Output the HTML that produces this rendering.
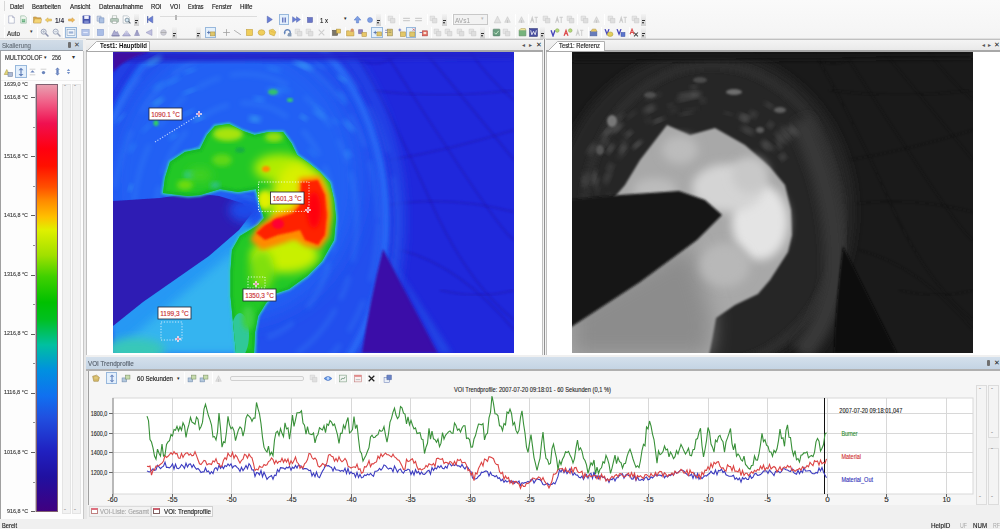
<!DOCTYPE html><html><head><meta charset="utf-8"><style>
html,body{margin:0;padding:0;}
body{width:1000px;height:529px;overflow:hidden;position:relative;background:#f0f0f0;font-family:"Liberation Sans",sans-serif;}
div{box-sizing:border-box;}
svg{position:absolute;display:block;}
</style></head><body>
<div style="position:absolute;left:0px;top:0px;width:1000px;height:39px;background:linear-gradient(#fafafa,#f4f4f4);"></div>
<div style="position:absolute;left:0px;top:38px;width:1000px;height:1px;background:#e0e0e0;"></div>
<div style="position:absolute;left:9.5px;top:0.80px;font-size:7px;line-height:11px;color:#202020;font-weight:normal;white-space:nowrap;transform:scaleX(0.845);transform-origin:0 50%;-webkit-text-stroke:0.15px #202020;">Datei</div>
<div style="position:absolute;left:32px;top:0.80px;font-size:7px;line-height:11px;color:#202020;font-weight:normal;white-space:nowrap;transform:scaleX(0.848);transform-origin:0 50%;-webkit-text-stroke:0.15px #202020;">Bearbeiten</div>
<div style="position:absolute;left:69.7px;top:0.80px;font-size:7px;line-height:11px;color:#202020;font-weight:normal;white-space:nowrap;transform:scaleX(0.884);transform-origin:0 50%;-webkit-text-stroke:0.15px #202020;">Ansicht</div>
<div style="position:absolute;left:98.6px;top:0.80px;font-size:7px;line-height:11px;color:#202020;font-weight:normal;white-space:nowrap;transform:scaleX(0.887);transform-origin:0 50%;-webkit-text-stroke:0.15px #202020;">Datenaufnahme</div>
<div style="position:absolute;left:151px;top:0.80px;font-size:7px;line-height:11px;color:#202020;font-weight:normal;white-space:nowrap;transform:scaleX(0.844);transform-origin:0 50%;-webkit-text-stroke:0.15px #202020;">ROI</div>
<div style="position:absolute;left:169.5px;top:0.80px;font-size:7px;line-height:11px;color:#202020;font-weight:normal;white-space:nowrap;transform:scaleX(0.829);transform-origin:0 50%;-webkit-text-stroke:0.15px #202020;">VOI</div>
<div style="position:absolute;left:187.5px;top:0.80px;font-size:7px;line-height:11px;color:#202020;font-weight:normal;white-space:nowrap;transform:scaleX(0.781);transform-origin:0 50%;-webkit-text-stroke:0.15px #202020;">Extras</div>
<div style="position:absolute;left:211.75px;top:0.80px;font-size:7px;line-height:11px;color:#202020;font-weight:normal;white-space:nowrap;transform:scaleX(0.843);transform-origin:0 50%;-webkit-text-stroke:0.15px #202020;">Fenster</div>
<div style="position:absolute;left:240px;top:0.80px;font-size:7px;line-height:11px;color:#202020;font-weight:normal;white-space:nowrap;transform:scaleX(0.893);transform-origin:0 50%;-webkit-text-stroke:0.15px #202020;">Hilfe</div>
<div style="position:absolute;left:4px;top:1px;width:1px;height:10px;background:#d8d8d8;"></div>
<div style="position:absolute;left:4px;top:14px;width:1px;height:11px;background:#d4d4d4;border-right:1px solid #fff;"></div>
<svg style="left:7px;top:15px;opacity:0.85" width="9" height="9" viewBox="0 0 16 16"><path d="M3 1.5 H10 L13 4.5 V14.5 H3 Z" fill="#fff" stroke="#8088a8"/><path d="M10 1.5 V4.5 H13" fill="#dde" stroke="#8088a8"/></svg>
<svg style="left:19px;top:15px;opacity:0.85" width="9" height="9" viewBox="0 0 16 16"><path d="M3 1.5 H10 L13 4.5 V14.5 H3 Z" fill="#eef6ee" stroke="#70a080"/><path d="M5 7 H11 V13 H5 Z" fill="#48a068"/><path d="M6 8 H10 M6 10 H10" stroke="#c0e0c0"/></svg>
<div style="position:absolute;left:30px;top:14px;width:1px;height:11px;background:#d4d4d4;border-right:1px solid #fff;"></div>
<svg style="left:33px;top:15px;opacity:0.85" width="9" height="9" viewBox="0 0 16 16"><path d="M1 3.5 H6 L7.5 5 H14 V14 H1 Z" fill="#d8a030" stroke="#a07018"/><path d="M3 7 H15.5 L13.5 14 H1 Z" fill="#f4d060" stroke="#b08020" stroke-width="0.6"/></svg>
<svg style="left:44px;top:16px;opacity:0.85" width="9" height="8" viewBox="0 0 16 16"><path d="M1.5 8 L7 3.5 V6 H14 V10 H7 V12.5 Z" fill="#f0c850" stroke="#c09838"/></svg>
<div style="position:absolute;left:55px;top:14.50px;font-size:7px;line-height:11px;color:#303040;font-weight:bold;white-space:nowrap;transform:scaleX(0.925);transform-origin:0 50%;">1/4</div>
<svg style="left:67px;top:16px;opacity:0.85" width="9" height="8" viewBox="0 0 16 16"><path d="M14.5 8 L9 3.5 V6 H2 V10 H9 V12.5 Z" fill="#f0b040" stroke="#c08828"/></svg>
<div style="position:absolute;left:79px;top:14px;width:1px;height:11px;background:#d4d4d4;border-right:1px solid #fff;"></div>
<svg style="left:82px;top:15px;opacity:0.85" width="9" height="9" viewBox="0 0 16 16"><rect x="1" y="1" width="14" height="14" rx="1" fill="#2838a0"/><rect x="4" y="1.5" width="8" height="5.5" fill="#f0f0ff"/><rect x="4" y="10" width="8" height="5" fill="#6878c8"/></svg>
<div style="position:absolute;left:93px;top:14px;width:1px;height:11px;background:#d4d4d4;border-right:1px solid #fff;"></div>
<svg style="left:96px;top:15px;opacity:0.85" width="9" height="9" viewBox="0 0 16 16"><path d="M2 2 H9 V11 H2 Z" fill="#c8d4e8" stroke="#7088b0"/><path d="M6 5 H14 V14 H6 Z" fill="#a0b8e0" stroke="#5878b0"/></svg>
<div style="position:absolute;left:108px;top:14px;width:1px;height:11px;background:#d4d4d4;border-right:1px solid #fff;"></div>
<svg style="left:110px;top:15px;opacity:0.85" width="9" height="9" viewBox="0 0 16 16"><rect x="4" y="1.5" width="8" height="5" fill="#fff" stroke="#8a9a90"/><rect x="1" y="6" width="14" height="7" rx="1.5" fill="#a8c0b0" stroke="#708878"/><rect x="4" y="11" width="8" height="4" fill="#fff" stroke="#8a9a90"/></svg>
<svg style="left:122px;top:15px;opacity:0.85" width="9" height="9" viewBox="0 0 16 16"><path d="M2 1.5 H10 L13 4.5 V14.5 H2 Z" fill="#fff" stroke="#8898a0"/><circle cx="9" cy="9" r="3.5" fill="#d0e4f0" stroke="#506878" stroke-width="1.3"/><path d="M11.5 11.5 L15 15" stroke="#405060" stroke-width="2"/></svg>
<div style="position:absolute;left:134px;top:14px;width:5px;height:12px;background:linear-gradient(#f4f4f4,#d0d0d0);"></div>
<div style="position:absolute;left:135px;top:20px;width:3px;height:1px;background:#333;"></div>
<div style="position:absolute;left:135px;top:22px;width:0;height:0;border-left:1.5px solid transparent;border-right:1.5px solid transparent;border-top:2px solid #222;"></div>
<div style="position:absolute;left:144px;top:14px;width:1px;height:11px;background:#d4d4d4;border-right:1px solid #fff;"></div>
<svg style="left:146px;top:15px;opacity:0.85" width="9" height="9" viewBox="0 0 16 16"><path d="M12 2 L3 8 L12 14 Z" fill="#5068d0" stroke="#3048a0"/><rect x="2" y="2" width="2" height="12" fill="#3048a0"/></svg>
<div style="position:absolute;left:160px;top:16px;width:97px;height:2px;background:#dcdcdc;border-bottom:1px solid #f8f8f8;"></div>
<div style="position:absolute;left:175px;top:15px;width:2px;height:5px;background:#b8b8b8;"></div>
<svg style="left:265px;top:15px;opacity:0.85" width="9" height="9" viewBox="0 0 16 16"><path d="M4 2 L13 8 L4 14 Z" fill="#5068d0" stroke="#3048a0"/></svg>
<div style="position:absolute;left:279px;top:14px;width:10px;height:11px;background:#e4f0fc;border:1px solid #98b8dc;"></div>
<svg style="left:280px;top:16px;opacity:0.85" width="8" height="8" viewBox="0 0 16 16"><rect x="4" y="3" width="3" height="10" fill="#5868b8"/><rect x="9" y="3" width="3" height="10" fill="#5868b8"/></svg>
<svg style="left:292px;top:15px;opacity:0.85" width="9" height="9" viewBox="0 0 16 16"><path d="M1 3 L8 8 L1 13 Z M8 3 L15 8 L8 13 Z" fill="#5068d0" stroke="#3048a0" stroke-width="0.8"/></svg>
<div style="position:absolute;left:302px;top:14px;width:1px;height:11px;background:#d4d4d4;border-right:1px solid #fff;"></div>
<svg style="left:306px;top:16px;opacity:0.85" width="8" height="8" viewBox="0 0 16 16"><rect x="3" y="3" width="10" height="10" fill="#5060c0" stroke="#303890"/></svg>
<div style="position:absolute;left:317px;top:14px;width:1px;height:11px;background:#d4d4d4;border-right:1px solid #fff;"></div>
<div style="position:absolute;left:320px;top:14.50px;font-size:7px;line-height:11px;color:#202020;font-weight:normal;white-space:nowrap;transform:scaleX(0.857);transform-origin:0 50%;-webkit-text-stroke:0.15px #202020;">1 x</div>
<div style="position:absolute;left:344px;top:15px;font-size:5px;line-height:7px;color:#222;font-weight:normal;white-space:nowrap;">&#9662;</div>
<svg style="left:353px;top:15px;opacity:0.85" width="9" height="9" viewBox="0 0 16 16"><path d="M8 2 L14 9 H10 V14 H6 V9 H2 Z" fill="#6a90e0" stroke="#4068c0"/></svg>
<svg style="left:366px;top:16px;opacity:0.85" width="8" height="8" viewBox="0 0 16 16"><circle cx="8" cy="8" r="5" fill="#6a90e0" stroke="#4068c0"/></svg>
<div style="position:absolute;left:376px;top:14px;width:5px;height:12px;background:linear-gradient(#f4f4f4,#d0d0d0);"></div>
<div style="position:absolute;left:377px;top:20px;width:3px;height:1px;background:#333;"></div>
<div style="position:absolute;left:377px;top:22px;width:0;height:0;border-left:1.5px solid transparent;border-right:1.5px solid transparent;border-top:2px solid #222;"></div>
<div style="position:absolute;left:385px;top:14px;width:1px;height:11px;background:#d4d4d4;border-right:1px solid #fff;"></div>
<svg style="left:387px;top:15px;opacity:0.85" width="9" height="9" viewBox="0 0 16 16"><path d="M2 2 H10 V10 H2 Z" fill="#e4e4e4" stroke="#c8c8c8"/><path d="M6 6 H14 V14 H6 Z" fill="#dcdcdc" stroke="#c4c4c4"/></svg>
<div style="position:absolute;left:399px;top:14px;width:1px;height:11px;background:#d4d4d4;border-right:1px solid #fff;"></div>
<svg style="left:402px;top:15px;opacity:0.85" width="9" height="9" viewBox="0 0 16 16"><path d="M2 6 H14 M2 10 H14" stroke="#c8c8c8" stroke-width="2"/></svg>
<svg style="left:414px;top:15px;opacity:0.85" width="9" height="9" viewBox="0 0 16 16"><path d="M2 6 H14 M2 10 H14" stroke="#c8c8c8" stroke-width="2"/></svg>
<div style="position:absolute;left:427px;top:14px;width:1px;height:11px;background:#d4d4d4;border-right:1px solid #fff;"></div>
<svg style="left:429px;top:15px;opacity:0.85" width="9" height="9" viewBox="0 0 16 16"><path d="M2 2 H10 V10 H2 Z" fill="#e4e4e4" stroke="#c8c8c8"/><path d="M6 6 H14 V14 H6 Z" fill="#dcdcdc" stroke="#c4c4c4"/></svg>
<div style="position:absolute;left:442px;top:14px;width:5px;height:12px;background:linear-gradient(#f4f4f4,#d0d0d0);"></div>
<div style="position:absolute;left:443px;top:20px;width:3px;height:1px;background:#333;"></div>
<div style="position:absolute;left:443px;top:22px;width:0;height:0;border-left:1.5px solid transparent;border-right:1.5px solid transparent;border-top:2px solid #222;"></div>
<div style="position:absolute;left:452px;top:14px;width:1px;height:11px;background:#d4d4d4;border-right:1px solid #fff;"></div>
<div style="position:absolute;left:453px;top:14px;width:35px;height:11px;background:#f2f2f2;border:1px solid #c8c8c8;"></div>
<div style="position:absolute;left:455px;top:14.50px;font-size:7px;line-height:11px;color:#a0a0a0;font-weight:normal;white-space:nowrap;transform:scaleX(0.925);transform-origin:0 50%;">AVs1</div>
<div style="position:absolute;left:481px;top:15px;font-size:5px;line-height:7px;color:#bbb;font-weight:normal;white-space:nowrap;">&#9662;</div>
<svg style="left:493px;top:15px;opacity:0.9" width="9" height="9" viewBox="0 0 16 16"><path d="M2 14 L8 2 L14 14 Z" fill="#e0e0e0" stroke="#c4c4c4"/></svg>
<svg style="left:503px;top:15px;opacity:0.9" width="9" height="9" viewBox="0 0 16 16"><path d="M3 13 L8 3 L13 13 Z" fill="#dcdcdc" stroke="#c0c0c0"/><path d="M8 9 V14" stroke="#c0c0c0" stroke-width="2"/></svg>
<svg style="left:517px;top:15px;opacity:0.9" width="9" height="9" viewBox="0 0 16 16"><path d="M3 13 L8 3 L13 13 Z" fill="#dcdcdc" stroke="#c0c0c0"/><path d="M8 9 V14" stroke="#c0c0c0" stroke-width="2"/></svg>
<svg style="left:530px;top:15px;opacity:0.9" width="9" height="9" viewBox="0 0 16 16"><path d="M1 14 L4 4 L7 14 M2 10 H6 M8 4 H14 M11 4 V14" fill="none" stroke="#c8c8c8" stroke-width="1.8"/></svg>
<svg style="left:542px;top:15px;opacity:0.9" width="9" height="9" viewBox="0 0 16 16"><path d="M2 2 H10 V10 H2 Z" fill="#e4e4e4" stroke="#c8c8c8"/><path d="M6 6 H14 V14 H6 Z" fill="#dcdcdc" stroke="#c4c4c4"/></svg>
<svg style="left:555px;top:15px;opacity:0.9" width="9" height="9" viewBox="0 0 16 16"><path d="M1 14 L4 4 L7 14 M2 10 H6 M8 4 H14 M11 4 V14" fill="none" stroke="#c8c8c8" stroke-width="1.8"/></svg>
<svg style="left:566px;top:15px;opacity:0.9" width="9" height="9" viewBox="0 0 16 16"><path d="M2 2 H10 V10 H2 Z" fill="#e4e4e4" stroke="#c8c8c8"/><path d="M6 6 H14 V14 H6 Z" fill="#dcdcdc" stroke="#c4c4c4"/></svg>
<svg style="left:580px;top:15px;opacity:0.9" width="9" height="9" viewBox="0 0 16 16"><path d="M2 2 H10 V10 H2 Z" fill="#e4e4e4" stroke="#c8c8c8"/><path d="M6 6 H14 V14 H6 Z" fill="#dcdcdc" stroke="#c4c4c4"/></svg>
<svg style="left:592px;top:15px;opacity:0.9" width="9" height="9" viewBox="0 0 16 16"><path d="M3 13 L8 3 L13 13 Z" fill="#dcdcdc" stroke="#c0c0c0"/><path d="M8 9 V14" stroke="#c0c0c0" stroke-width="2"/></svg>
<svg style="left:607px;top:15px;opacity:0.9" width="9" height="9" viewBox="0 0 16 16"><path d="M2 2 H10 V10 H2 Z" fill="#e4e4e4" stroke="#c8c8c8"/><path d="M6 6 H14 V14 H6 Z" fill="#dcdcdc" stroke="#c4c4c4"/></svg>
<svg style="left:619px;top:15px;opacity:0.9" width="9" height="9" viewBox="0 0 16 16"><path d="M1 14 L4 4 L7 14 M2 10 H6 M8 4 H14 M11 4 V14" fill="none" stroke="#c8c8c8" stroke-width="1.8"/></svg>
<svg style="left:631px;top:15px;opacity:0.9" width="9" height="9" viewBox="0 0 16 16"><path d="M2 2 H10 V10 H2 Z" fill="#e4e4e4" stroke="#c8c8c8"/><path d="M6 6 H14 V14 H6 Z" fill="#dcdcdc" stroke="#c4c4c4"/></svg>
<div style="position:absolute;left:515px;top:14px;width:1px;height:11px;background:#d4d4d4;border-right:1px solid #fff;"></div>
<div style="position:absolute;left:528px;top:14px;width:1px;height:11px;background:#d4d4d4;border-right:1px solid #fff;"></div>
<div style="position:absolute;left:577px;top:14px;width:1px;height:11px;background:#d4d4d4;border-right:1px solid #fff;"></div>
<div style="position:absolute;left:604px;top:14px;width:1px;height:11px;background:#d4d4d4;border-right:1px solid #fff;"></div>
<div style="position:absolute;left:641px;top:14px;width:5px;height:12px;background:linear-gradient(#f4f4f4,#d0d0d0);"></div>
<div style="position:absolute;left:642px;top:20px;width:3px;height:1px;background:#333;"></div>
<div style="position:absolute;left:642px;top:22px;width:0;height:0;border-left:1.5px solid transparent;border-right:1.5px solid transparent;border-top:2px solid #222;"></div>
<div style="position:absolute;left:4px;top:27px;width:1px;height:11px;background:#d4d4d4;border-right:1px solid #fff;"></div>
<div style="position:absolute;left:7px;top:27.50px;font-size:7px;line-height:11px;color:#303030;font-weight:normal;white-space:nowrap;transform:scaleX(0.903);transform-origin:0 50%;-webkit-text-stroke:0.15px #303030;">Auto</div>
<div style="position:absolute;left:30px;top:28px;font-size:5px;line-height:7px;color:#333;font-weight:normal;white-space:nowrap;">&#9662;</div>
<div style="position:absolute;left:37px;top:27px;width:1px;height:11px;background:#d4d4d4;border-right:1px solid #fff;"></div>
<svg style="left:40px;top:28px;opacity:0.85" width="9" height="9" viewBox="0 0 16 16"><circle cx="6.5" cy="6.5" r="4.5" fill="#e8eef4" stroke="#8890a8" stroke-width="1.6"/><path d="M9.5 9.5 L15 15" stroke="#7880a0" stroke-width="2.6"/><path d="M4 6.5 H9 M6.5 4 V9" stroke="#8890a8" stroke-width="1"/></svg>
<svg style="left:52px;top:28px;opacity:0.85" width="9" height="9" viewBox="0 0 16 16"><circle cx="6.5" cy="6.5" r="4.5" fill="#e8eef4" stroke="#9098b0" stroke-width="1.6"/><path d="M9.5 9.5 L15 15" stroke="#8890a8" stroke-width="2.6"/><path d="M4 6.5 H9" stroke="#9098b0" stroke-width="1"/></svg>
<div style="position:absolute;left:63px;top:27px;width:1px;height:11px;background:#d4d4d4;border-right:1px solid #fff;"></div>
<div style="position:absolute;left:65px;top:27px;width:12px;height:11px;background:#e4f0fc;border:1px solid #98b8dc;"></div>
<svg style="left:66px;top:28px;opacity:0.85" width="10" height="9" viewBox="0 0 16 16"><rect x="1" y="3" width="14" height="10" fill="#f4f8fc" stroke="#7088a8"/><path d="M4 6 H12 V10 H4 Z" fill="#90a8d0"/></svg>
<svg style="left:81px;top:28px;opacity:0.85" width="9" height="9" viewBox="0 0 16 16"><rect x="1.5" y="2.5" width="13" height="11" fill="#a8bce8" stroke="#7890c8"/><path d="M4 8 H12" stroke="#e0e8ff" stroke-width="2"/></svg>
<div style="position:absolute;left:93px;top:27px;width:1px;height:11px;background:#d4d4d4;border-right:1px solid #fff;"></div>
<svg style="left:96px;top:28px;opacity:0.85" width="9" height="9" viewBox="0 0 16 16"><rect x="2.5" y="2.5" width="11" height="11" fill="#9cb4e4" stroke="#7890c8"/></svg>
<div style="position:absolute;left:108px;top:27px;width:1px;height:11px;background:#d4d4d4;border-right:1px solid #fff;"></div>
<svg style="left:111px;top:28px;opacity:0.85" width="9" height="9" viewBox="0 0 16 16"><path d="M1 14 L6 4 L9 9 L11 6 L15 14 Z" fill="#a0a0cc" stroke="#6a6aa0"/><path d="M2 14 H15" stroke="#505080"/></svg>
<svg style="left:122px;top:28px;opacity:0.85" width="9" height="9" viewBox="0 0 16 16"><path d="M1 14 L8 5 L15 14 Z" fill="#b0b0d8" stroke="#7070a8"/><path d="M5 10 L8 6 L11 10" fill="none" stroke="#f0f0ff"/></svg>
<svg style="left:133px;top:28px;opacity:0.85" width="8" height="9" viewBox="0 0 16 16"><path d="M3 14 L8 3 L13 14 Z" fill="#a0a0cc" stroke="#6a6aa0"/><path d="M8 3 V14" stroke="#6a6aa0"/></svg>
<svg style="left:145px;top:28px;opacity:0.85" width="8" height="9" viewBox="0 0 16 16"><path d="M14 2 L2 8 L14 14 Z" fill="#b8b8dc" stroke="#8080b0"/></svg>
<div style="position:absolute;left:157px;top:27px;width:1px;height:11px;background:#d4d4d4;border-right:1px solid #fff;"></div>
<svg style="left:159px;top:28px;opacity:0.85" width="9" height="9" viewBox="0 0 16 16"><circle cx="8" cy="8" r="5" fill="#c8c8d0" stroke="#a0a0b0"/><path d="M3 8 H13" stroke="#888"/></svg>
<div style="position:absolute;left:172px;top:27px;width:5px;height:12px;background:linear-gradient(#f4f4f4,#d0d0d0);"></div>
<div style="position:absolute;left:173px;top:33px;width:3px;height:1px;background:#333;"></div>
<div style="position:absolute;left:173px;top:35px;width:0;height:0;border-left:1.5px solid transparent;border-right:1.5px solid transparent;border-top:2px solid #222;"></div>
<div style="position:absolute;left:196px;top:27px;width:5px;height:12px;background:linear-gradient(#f4f4f4,#d0d0d0);"></div>
<div style="position:absolute;left:197px;top:33px;width:3px;height:1px;background:#333;"></div>
<div style="position:absolute;left:197px;top:35px;width:0;height:0;border-left:1.5px solid transparent;border-right:1.5px solid transparent;border-top:2px solid #222;"></div>
<div style="position:absolute;left:205px;top:27px;width:11px;height:11px;background:#e4f0fc;border:1px solid #98b8dc;"></div>
<svg style="left:206px;top:28px;opacity:0.85" width="10" height="9" viewBox="0 0 16 16"><path d="M1 8 H7 M4 5 V11" stroke="#4060a0" stroke-width="1.6"/><rect x="7" y="7" width="8" height="7" fill="#e0c050" stroke="#a08020"/></svg>
<svg style="left:222px;top:28px;opacity:0.85" width="9" height="9" viewBox="0 0 16 16"><path d="M8 2 V14 M2 8 H14" stroke="#909090" stroke-width="1.4"/></svg>
<svg style="left:233px;top:28px;opacity:0.85" width="9" height="9" viewBox="0 0 16 16"><path d="M2 4 L14 12" stroke="#909090" stroke-width="1.4"/></svg>
<svg style="left:245px;top:28px;opacity:0.85" width="9" height="9" viewBox="0 0 16 16"><rect x="2.5" y="2.5" width="11" height="11" fill="#f0c840" stroke="#b89020"/></svg>
<svg style="left:257px;top:28px;opacity:0.85" width="9" height="9" viewBox="0 0 16 16"><ellipse cx="8" cy="8" rx="6" ry="5" fill="#f0c840" stroke="#b89020"/></svg>
<svg style="left:268px;top:28px;opacity:0.85" width="9" height="9" viewBox="0 0 16 16"><path d="M2 4 L9 2 L14 7 L11 14 L3 11 Z" fill="#f0c840" stroke="#b89020"/><path d="M5 6 L12 8" stroke="#d8a028"/></svg>
<div style="position:absolute;left:279px;top:27px;width:1px;height:11px;background:#d4d4d4;border-right:1px solid #fff;"></div>
<svg style="left:283px;top:28px;opacity:0.85" width="9" height="9" viewBox="0 0 16 16"><path d="M3 9 A5 5 0 1 1 8 13" fill="none" stroke="#4870b0" stroke-width="2.5"/><path d="M1 8 L5 8 L3 12 Z" fill="#4870b0"/><rect x="9" y="9" width="6" height="6" fill="#7088a8"/></svg>
<svg style="left:294px;top:28px;opacity:0.85" width="9" height="9" viewBox="0 0 16 16"><path d="M2 2 H10 V10 H2 Z" fill="#e4e4e4" stroke="#c8c8c8"/><path d="M6 6 H14 V14 H6 Z" fill="#dcdcdc" stroke="#c4c4c4"/></svg>
<svg style="left:305px;top:28px;opacity:0.85" width="9" height="9" viewBox="0 0 16 16"><path d="M2 2 H10 V10 H2 Z" fill="#e4e4e4" stroke="#c8c8c8"/><path d="M6 6 H14 V14 H6 Z" fill="#dcdcdc" stroke="#c4c4c4"/></svg>
<svg style="left:317px;top:28px;opacity:0.85" width="9" height="9" viewBox="0 0 16 16"><path d="M3 3 L13 13 M13 3 L3 13" stroke="#c8c8c8" stroke-width="2"/></svg>
<div style="position:absolute;left:330px;top:27px;width:1px;height:11px;background:#d4d4d4;border-right:1px solid #fff;"></div>
<svg style="left:332px;top:28px;opacity:0.85" width="9" height="9" viewBox="0 0 16 16"><rect x="1" y="4" width="9" height="9" fill="#686050" stroke="#403828"/><rect x="8" y="2" width="7" height="7" fill="#e8c040" stroke="#a08020"/></svg>
<div style="position:absolute;left:345px;top:27px;width:1px;height:11px;background:#d4d4d4;border-right:1px solid #fff;"></div>
<svg style="left:346px;top:28px;opacity:0.85" width="9" height="9" viewBox="0 0 16 16"><path d="M1 5 H6 L7 6 H14 V14 H1 Z" fill="#e8c050" stroke="#a88020"/><circle cx="11" cy="4" r="3" fill="#d08050"/></svg>
<svg style="left:358px;top:28px;opacity:0.85" width="9" height="9" viewBox="0 0 16 16"><path d="M1 3 L8 3 L8 10 L1 10 Z" fill="#8070b8" stroke="#504090"/><rect x="7" y="8" width="8" height="7" fill="#e8c050" stroke="#a88020"/></svg>
<div style="position:absolute;left:371px;top:27px;width:12px;height:11px;background:#e4f0fc;border:1px solid #98b8dc;"></div>
<svg style="left:373px;top:28px;opacity:0.85" width="9" height="9" viewBox="0 0 16 16"><path d="M1 8 H7 M4 5 V11" stroke="#4060a0" stroke-width="1.6"/><rect x="7" y="7" width="8" height="7" fill="#e0c050" stroke="#a08020"/></svg>
<svg style="left:384px;top:28px;opacity:0.85" width="9" height="9" viewBox="0 0 16 16"><path d="M2 4 H8 M2 8 H8" stroke="#6060a0" stroke-width="1.4"/><rect x="6" y="2" width="9" height="12" fill="#d8c060" stroke="#807030"/><path d="M8 5 H13 M8 8 H13" stroke="#807030"/></svg>
<svg style="left:397px;top:28px;opacity:0.85" width="9" height="9" viewBox="0 0 16 16"><path d="M5 1 V6 M2.5 3.5 H7.5" stroke="#4050c0" stroke-width="1.6"/><rect x="6" y="7" width="9" height="8" fill="#e0c050" stroke="#a08020"/></svg>
<div style="position:absolute;left:406px;top:27px;width:10px;height:11px;background:#e4f0fc;border:1px solid #98b8dc;"></div>
<svg style="left:407px;top:28px;opacity:0.85" width="9" height="9" viewBox="0 0 16 16"><path d="M10 1 L14 5 M14 1 L10 5" stroke="#d04040" stroke-width="1.4"/><rect x="5" y="7" width="9" height="8" fill="#e0c050" stroke="#a08020"/></svg>
<svg style="left:419px;top:28px;opacity:0.85" width="9" height="9" viewBox="0 0 16 16"><path d="M1 8 H6" stroke="#4050a0" stroke-width="1.4"/><rect x="6" y="5" width="9" height="9" fill="#e05040" stroke="#a02020"/><rect x="8" y="7" width="5" height="4" fill="#f8e0d0"/></svg>
<div style="position:absolute;left:431px;top:27px;width:1px;height:11px;background:#d4d4d4;border-right:1px solid #fff;"></div>
<svg style="left:433px;top:28px;opacity:0.9" width="9" height="9" viewBox="0 0 16 16"><path d="M2 2 H10 V10 H2 Z" fill="#e4e4e4" stroke="#c8c8c8"/><path d="M6 6 H14 V14 H6 Z" fill="#dcdcdc" stroke="#c4c4c4"/></svg>
<svg style="left:444px;top:28px;opacity:0.9" width="9" height="9" viewBox="0 0 16 16"><path d="M2 2 H10 V10 H2 Z" fill="#e4e4e4" stroke="#c8c8c8"/><path d="M6 6 H14 V14 H6 Z" fill="#dcdcdc" stroke="#c4c4c4"/></svg>
<svg style="left:456px;top:28px;opacity:0.9" width="9" height="9" viewBox="0 0 16 16"><path d="M2 2 H10 V10 H2 Z" fill="#e4e4e4" stroke="#c8c8c8"/><path d="M6 6 H14 V14 H6 Z" fill="#dcdcdc" stroke="#c4c4c4"/></svg>
<svg style="left:468px;top:28px;opacity:0.9" width="9" height="9" viewBox="0 0 16 16"><path d="M2 2 H10 V10 H2 Z" fill="#e4e4e4" stroke="#c8c8c8"/><path d="M6 6 H14 V14 H6 Z" fill="#dcdcdc" stroke="#c4c4c4"/></svg>
<div style="position:absolute;left:480px;top:27px;width:5px;height:12px;background:linear-gradient(#f4f4f4,#d0d0d0);"></div>
<div style="position:absolute;left:481px;top:33px;width:3px;height:1px;background:#333;"></div>
<div style="position:absolute;left:481px;top:35px;width:0;height:0;border-left:1.5px solid transparent;border-right:1.5px solid transparent;border-top:2px solid #222;"></div>
<div style="position:absolute;left:489px;top:27px;width:1px;height:11px;background:#d4d4d4;border-right:1px solid #fff;"></div>
<svg style="left:492px;top:28px;opacity:0.85" width="9" height="9" viewBox="0 0 16 16"><rect x="2" y="2" width="12" height="12" rx="1" fill="#50906a" stroke="#306048"/><path d="M4 8 L7 11 L12 5" fill="none" stroke="#d0f0d0" stroke-width="1.5"/></svg>
<svg style="left:502px;top:28px;opacity:0.85" width="9" height="9" viewBox="0 0 16 16"><path d="M2 2 H10 V10 H2 Z" fill="#e4e4e4" stroke="#c8c8c8"/><path d="M6 6 H14 V14 H6 Z" fill="#dcdcdc" stroke="#c4c4c4"/></svg>
<div style="position:absolute;left:515px;top:27px;width:1px;height:11px;background:#d4d4d4;border-right:1px solid #fff;"></div>
<svg style="left:518px;top:28px;opacity:0.85" width="9" height="9" viewBox="0 0 16 16"><path d="M2 4 H14 V14 H2 Z" fill="#60a868" stroke="#407848"/><path d="M2 4 L5 1 H13 L14 4" fill="#f0e890" stroke="#a09040"/></svg>
<svg style="left:529px;top:28px;opacity:0.85" width="9" height="9" viewBox="0 0 16 16"><rect x="1" y="1" width="14" height="14" fill="#283090" stroke="#101860"/><path d="M3 4 L5 12 L8 6 L11 12 L13 4" fill="none" stroke="#fff" stroke-width="1.4"/></svg>
<div style="position:absolute;left:540px;top:27px;width:5px;height:12px;background:linear-gradient(#f4f4f4,#d0d0d0);"></div>
<div style="position:absolute;left:541px;top:33px;width:3px;height:1px;background:#333;"></div>
<div style="position:absolute;left:541px;top:35px;width:0;height:0;border-left:1.5px solid transparent;border-right:1.5px solid transparent;border-top:2px solid #222;"></div>
<svg style="left:550px;top:28px;opacity:0.85" width="10" height="9" viewBox="0 0 16 16"><path d="M1 4 L4.5 14 L8 4" fill="none" stroke="#2828b0" stroke-width="2.4"/><circle cx="12" cy="4.5" r="3.2" fill="#a8d860" stroke="#709030"/></svg>
<svg style="left:563px;top:28px;opacity:0.85" width="10" height="9" viewBox="0 0 16 16"><path d="M1 14 L4.5 4 L8 14 M2.5 10 H6.5" fill="none" stroke="#d83030" stroke-width="2.2"/><circle cx="12" cy="4.5" r="3.2" fill="#a8d860" stroke="#709030"/></svg>
<svg style="left:575px;top:28px;opacity:0.85" width="10" height="9" viewBox="0 0 16 16"><path d="M1 14 L4 4 L7 14 M2 10 H6 M8 4 H14 M11 4 V14" fill="none" stroke="#c8c8c8" stroke-width="1.8"/></svg>
<div style="position:absolute;left:588px;top:27px;width:1px;height:11px;background:#d4d4d4;border-right:1px solid #fff;"></div>
<svg style="left:589px;top:28px;opacity:0.85" width="9" height="9" viewBox="0 0 16 16"><rect x="2" y="6" width="12" height="8" fill="#5068b0" stroke="#304890"/><path d="M3 6 L6 2 H12 L14 6" fill="#e8c040" stroke="#a08020"/></svg>
<div style="position:absolute;left:601px;top:27px;width:1px;height:11px;background:#d4d4d4;border-right:1px solid #fff;"></div>
<svg style="left:604px;top:28px;opacity:0.85" width="10" height="9" viewBox="0 0 16 16"><path d="M1 2 L4.5 11 L8 2" fill="none" stroke="#2828b0" stroke-width="2.4"/><ellipse cx="10" cy="11" rx="5" ry="4" fill="#e0c840" stroke="#a09020"/></svg>
<svg style="left:616px;top:28px;opacity:0.85" width="10" height="9" viewBox="0 0 16 16"><path d="M1 2 L4.5 11 L8 2" fill="none" stroke="#2828b0" stroke-width="2.4"/><rect x="8" y="8" width="7" height="7" fill="#4060c8" stroke="#203898"/></svg>
<div style="position:absolute;left:629px;top:27px;width:1px;height:11px;background:#d4d4d4;border-right:1px solid #fff;"></div>
<svg style="left:629px;top:28px;opacity:0.85" width="10" height="9" viewBox="0 0 16 16"><path d="M1 11 L4.5 2 L8 11 M2.5 8 H6.5" fill="none" stroke="#d83030" stroke-width="2"/><path d="M8 8 L15 15 M15 8 L8 15" stroke="#202020" stroke-width="1.8"/></svg>
<div style="position:absolute;left:641px;top:27px;width:5px;height:12px;background:linear-gradient(#f4f4f4,#d0d0d0);"></div>
<div style="position:absolute;left:642px;top:33px;width:3px;height:1px;background:#333;"></div>
<div style="position:absolute;left:642px;top:35px;width:0;height:0;border-left:1.5px solid transparent;border-right:1.5px solid transparent;border-top:2px solid #222;"></div>
<div style="position:absolute;left:0px;top:39px;width:87px;height:481px;background:#f0f0f0;"></div>
<div style="position:absolute;left:0px;top:40px;width:83px;height:10px;background:linear-gradient(#d2dde8,#c6d4e2);"></div>
<div style="position:absolute;left:2px;top:39.50px;font-size:7px;line-height:11px;color:#606a74;font-weight:normal;white-space:nowrap;transform:scaleX(0.877);transform-origin:0 50%;-webkit-text-stroke:0.1px #606a74;">Skalierung</div>
<div style="position:absolute;left:68px;top:42px;width:3px;height:6px;background:#707070;border-radius:1px;"></div>
<div style="position:absolute;left:74px;top:40px;font-size:7px;line-height:9px;color:#404040;font-weight:normal;white-space:nowrap;">&#x2715;</div>
<div style="position:absolute;left:0px;top:50px;width:83px;height:1px;background:#9aa0a8;"></div>
<div style="position:absolute;left:0px;top:51px;width:83px;height:468px;background:#fdfdfd;border-left:1px solid #a0a0a0;"></div>
<div style="position:absolute;left:5px;top:52.20px;font-size:7px;line-height:11px;color:#303030;font-weight:normal;white-space:nowrap;transform:scaleX(0.836);transform-origin:0 50%;-webkit-text-stroke:0.15px #303030;">MULTICOLOF</div>
<div style="position:absolute;left:44px;top:54px;font-size:5px;line-height:7px;color:#222;font-weight:normal;white-space:nowrap;">&#9662;</div>
<div style="position:absolute;left:51.8px;top:52.20px;font-size:7px;line-height:11px;color:#303030;font-weight:normal;white-space:nowrap;transform:scaleX(0.771);transform-origin:0 50%;-webkit-text-stroke:0.15px #303030;">256</div>
<div style="position:absolute;left:72px;top:53px;font-size:6px;line-height:8px;color:#333;font-weight:normal;white-space:nowrap;">&#9662;</div>
<svg style="left:3px;top:67px;opacity:0.85" width="10" height="10" viewBox="0 0 16 16"><path d="M2 12 L6 4 L10 12 Z" fill="#e0d060" stroke="#a09030"/><rect x="8" y="9" width="7" height="6" fill="#a0b0d0" stroke="#607090"/></svg>
<div style="position:absolute;left:15px;top:65px;width:12px;height:13px;background:#e4f0fc;border:1px solid #98b8dc;"></div>
<svg style="left:16px;top:67px;opacity:0.85" width="10" height="10" viewBox="0 0 16 16"><path d="M8 1 L12 5 H4 Z M8 15 L12 11 H4 Z" fill="#5070b0"/><rect x="7" y="5" width="2" height="6" fill="#5070b0"/></svg>
<svg style="left:28px;top:67px;opacity:0.85" width="9" height="10" viewBox="0 0 16 16"><path d="M3 3 H13" stroke="#a0a0a0"/><path d="M8 5 L12 9 H4 Z" fill="#5070b0"/><path d="M3 13 H13" stroke="#a0a0a0"/></svg>
<svg style="left:39px;top:67px;opacity:0.85" width="9" height="10" viewBox="0 0 16 16"><path d="M3 3 H13" stroke="#a0a0a0"/><circle cx="8" cy="9" r="3" fill="#5070b0"/></svg>
<svg style="left:53px;top:66px;opacity:0.85" width="9" height="11" viewBox="0 0 16 16"><path d="M8 1 L12 5 H4 Z M8 15 L12 11 H4 Z" fill="#4868b0"/><rect x="6" y="5" width="4" height="6" fill="#4868b0"/></svg>
<svg style="left:64px;top:66px;opacity:0.85" width="9" height="11" viewBox="0 0 16 16"><path d="M8 3 L11 7 H5 Z M8 13 L11 9 H5 Z" fill="#6080c0"/></svg>
<div style="position:absolute;left:1px;top:80px;width:82px;height:1px;background:#f0f0f0;"></div>
<div style="position:absolute;left:36px;top:84px;width:22px;height:428px;border:1px solid #806070;background:linear-gradient(#e8a0b0 0%,#f06088 4%,#f01050 9%,#ff0010 15%,#ff1000 19%,#ff5000 24%,#ff8800 27%,#ffc000 31%,#e0f000 34%,#a0e000 40%,#40d000 45%,#00c000 51%,#00c020 55%,#00c060 58%,#00c0a0 61%,#0090e0 67%,#1070f0 73%,#2050e0 78%,#2020c0 86%,#2010a0 92%,#400080 100%);"></div>
<div style="position:absolute;left:35px;top:84px;width:1px;height:428px;background:#c8c0c8;"></div>
<div style="position:absolute;left:4px;top:79.00px;font-size:6px;line-height:10px;color:#383838;font-weight:normal;white-space:nowrap;transform:scaleX(0.897);transform-origin:0 50%;-webkit-text-stroke:0.12px #383838;">1639,0 °C</div>
<div style="position:absolute;left:4px;top:91.50px;font-size:6px;line-height:10px;color:#383838;font-weight:normal;white-space:nowrap;transform:scaleX(0.897);transform-origin:0 50%;-webkit-text-stroke:0.12px #383838;">1616,8 °C</div>
<div style="position:absolute;left:31px;top:97px;width:4px;height:1px;background:#606060;"></div>
<div style="position:absolute;left:4px;top:150.70px;font-size:6px;line-height:10px;color:#383838;font-weight:normal;white-space:nowrap;transform:scaleX(0.897);transform-origin:0 50%;-webkit-text-stroke:0.12px #383838;">1516,8 °C</div>
<div style="position:absolute;left:31px;top:156px;width:4px;height:1px;background:#606060;"></div>
<div style="position:absolute;left:4px;top:209.80px;font-size:6px;line-height:10px;color:#383838;font-weight:normal;white-space:nowrap;transform:scaleX(0.897);transform-origin:0 50%;-webkit-text-stroke:0.12px #383838;">1416,8 °C</div>
<div style="position:absolute;left:31px;top:215px;width:4px;height:1px;background:#606060;"></div>
<div style="position:absolute;left:4px;top:269.00px;font-size:6px;line-height:10px;color:#383838;font-weight:normal;white-space:nowrap;transform:scaleX(0.897);transform-origin:0 50%;-webkit-text-stroke:0.12px #383838;">1316,8 °C</div>
<div style="position:absolute;left:31px;top:275px;width:4px;height:1px;background:#606060;"></div>
<div style="position:absolute;left:4px;top:328.20px;font-size:6px;line-height:10px;color:#383838;font-weight:normal;white-space:nowrap;transform:scaleX(0.897);transform-origin:0 50%;-webkit-text-stroke:0.12px #383838;">1216,8 °C</div>
<div style="position:absolute;left:31px;top:334px;width:4px;height:1px;background:#606060;"></div>
<div style="position:absolute;left:4px;top:387.30px;font-size:6px;line-height:10px;color:#383838;font-weight:normal;white-space:nowrap;transform:scaleX(0.928);transform-origin:0 50%;-webkit-text-stroke:0.12px #383838;">1116,8 °C</div>
<div style="position:absolute;left:31px;top:393px;width:4px;height:1px;background:#606060;"></div>
<div style="position:absolute;left:4px;top:446.50px;font-size:6px;line-height:10px;color:#383838;font-weight:normal;white-space:nowrap;transform:scaleX(0.897);transform-origin:0 50%;-webkit-text-stroke:0.12px #383838;">1016,8 °C</div>
<div style="position:absolute;left:31px;top:452px;width:4px;height:1px;background:#606060;"></div>
<div style="position:absolute;left:6.8px;top:505.60px;font-size:6px;line-height:10px;color:#383838;font-weight:normal;white-space:nowrap;transform:scaleX(0.906);transform-origin:0 50%;-webkit-text-stroke:0.12px #383838;">916,8 °C</div>
<div style="position:absolute;left:31px;top:511px;width:4px;height:1px;background:#606060;"></div>
<div style="position:absolute;left:33px;top:127px;width:2px;height:1px;background:#909090;"></div>
<div style="position:absolute;left:33px;top:186px;width:2px;height:1px;background:#909090;"></div>
<div style="position:absolute;left:33px;top:245px;width:2px;height:1px;background:#909090;"></div>
<div style="position:absolute;left:33px;top:304px;width:2px;height:1px;background:#909090;"></div>
<div style="position:absolute;left:33px;top:363px;width:2px;height:1px;background:#909090;"></div>
<div style="position:absolute;left:33px;top:422px;width:2px;height:1px;background:#909090;"></div>
<div style="position:absolute;left:33px;top:482px;width:2px;height:1px;background:#909090;"></div>
<div style="position:absolute;left:62px;top:84px;width:9px;height:430px;background:#f2f2f2;border:1px solid #e4e4e4;"></div>
<div style="position:absolute;left:72px;top:84px;width:9px;height:430px;background:#f2f2f2;border:1px solid #e4e4e4;"></div>
<div style="position:absolute;left:64px;top:83px;font-size:6px;line-height:8px;color:#888;font-weight:normal;white-space:nowrap;">&#710;</div>
<div style="position:absolute;left:74px;top:83px;font-size:6px;line-height:8px;color:#888;font-weight:normal;white-space:nowrap;">&#710;</div>
<div style="position:absolute;left:64px;top:507px;font-size:6px;line-height:8px;color:#888;font-weight:normal;white-space:nowrap;">&#711;</div>
<div style="position:absolute;left:74px;top:507px;font-size:6px;line-height:8px;color:#888;font-weight:normal;white-space:nowrap;">&#711;</div>
<div style="position:absolute;left:83px;top:51px;width:4px;height:468px;background:#e8e8e8;border-left:1px solid #c8c8c8;"></div>
<div style="position:absolute;left:86px;top:39px;width:457px;height:316px;background:#fbfbfb;border:1px solid #c0c0c0;"></div>
<div style="position:absolute;left:86px;top:40px;width:457px;height:11px;background:linear-gradient(#f4f4f4,#e8e8e8);"></div>
<div style="position:absolute;left:86px;top:50px;width:457px;height:2px;background:#a8a8a8;"></div>
<svg style="left:86px;top:40px" width="66" height="11"><path d="M0.5 11.5 L10.5 1.5 L63.5 1.5 L63.5 11.5" fill="#fff" stroke="#b0b0b0" stroke-width="1"/></svg>
<div style="position:absolute;left:100px;top:40.00px;font-size:7px;line-height:11px;color:#101010;font-weight:bold;white-space:nowrap;transform:scaleX(0.865);transform-origin:0 50%;">Test1: Hauptbild</div>
<div style="position:absolute;left:86px;top:51px;width:457px;height:1px;background:#a8a8a8;"></div>
<div style="position:absolute;left:522px;top:41px;font-size:6px;line-height:8px;color:#555;font-weight:normal;white-space:nowrap;">&#9666;</div>
<div style="position:absolute;left:529px;top:41px;font-size:6px;line-height:8px;color:#555;font-weight:normal;white-space:nowrap;">&#9656;</div>
<div style="position:absolute;left:535.5px;top:40px;font-size:7px;line-height:9px;color:#222;font-weight:normal;white-space:nowrap;">&#x2715;</div>
<div style="position:absolute;left:87px;top:52px;width:455px;height:303px;background:#fff;"></div>
<div style="position:absolute;left:543px;top:39px;width:3px;height:318px;background:#f4f4f4;"></div>
<div style="position:absolute;left:544px;top:39px;width:1px;height:317px;background:#909090;"></div>
<div style="position:absolute;left:546px;top:39px;width:454px;height:316px;background:#fbfbfb;border:1px solid #c0c0c0;"></div>
<div style="position:absolute;left:546px;top:40px;width:454px;height:11px;background:linear-gradient(#f4f4f4,#e8e8e8);"></div>
<div style="position:absolute;left:546px;top:50px;width:454px;height:2px;background:#a8a8a8;"></div>
<svg style="left:547px;top:40px" width="59" height="11"><path d="M0.5 11.5 L10.5 1.5 L57.5 1.5 L57.5 11.5" fill="#fff" stroke="#b0b0b0" stroke-width="1"/></svg>
<div style="position:absolute;left:558.5px;top:40.00px;font-size:7px;line-height:11px;color:#202020;font-weight:normal;white-space:nowrap;transform:scaleX(0.836);transform-origin:0 50%;-webkit-text-stroke:0.15px #202020;">Test1: Referenz</div>
<div style="position:absolute;left:546px;top:51px;width:454px;height:1px;background:#a8a8a8;"></div>
<div style="position:absolute;left:982px;top:41px;font-size:6px;line-height:8px;color:#555;font-weight:normal;white-space:nowrap;">&#9666;</div>
<div style="position:absolute;left:988px;top:41px;font-size:6px;line-height:8px;color:#555;font-weight:normal;white-space:nowrap;">&#9656;</div>
<div style="position:absolute;left:994px;top:40px;font-size:7px;line-height:9px;color:#222;font-weight:normal;white-space:nowrap;">&#x2715;</div>
<div style="position:absolute;left:547px;top:52px;width:453px;height:303px;background:#fff;"></div>
<svg style="left:113px;top:52px" width="401" height="301" viewBox="113 52 401 301">
<defs>
<filter id="b05" x="-20%" y="-20%" width="140%" height="140%"><feGaussianBlur stdDeviation="0.6"/></filter>
<filter id="b1" x="-20%" y="-20%" width="140%" height="140%"><feGaussianBlur stdDeviation="1.2"/></filter>
<filter id="b2" x="-20%" y="-20%" width="140%" height="140%"><feGaussianBlur stdDeviation="2.5"/></filter>
<filter id="b4" x="-30%" y="-30%" width="160%" height="160%"><feGaussianBlur stdDeviation="5"/></filter>
<filter id="b8" x="-50%" y="-50%" width="200%" height="200%"><feGaussianBlur stdDeviation="10"/></filter>
<clipPath id="tc"><rect x="113" y="52" width="401" height="301"/></clipPath>
</defs><g clip-path="url(#tc)">
<rect x="100" y="40" width="430" height="330" fill="#2028dc"/>
<path d="M355 52 Q 395 120 430 200 T 514 320" stroke="#2010a0" stroke-width="2" fill="none" filter="url(#b1)" opacity="0.35"/>
<path d="M385 52 Q 425 115 465 175 T 514 240" stroke="#2010a0" stroke-width="2" fill="none" filter="url(#b1)" opacity="0.35"/>
<path d="M425 52 Q 465 100 514 160" stroke="#2010a0" stroke-width="2" fill="none" filter="url(#b1)" opacity="0.35"/>
<path d="M470 52 Q 490 80 514 100" stroke="#2010a0" stroke-width="2" fill="none" filter="url(#b1)" opacity="0.35"/>
<path d="M370 90 Q 440 100 514 90" stroke="#2010a0" stroke-width="2" fill="none" filter="url(#b1)" opacity="0.35"/>
<path d="M390 160 Q 450 150 514 130" stroke="#2010a0" stroke-width="2" fill="none" filter="url(#b1)" opacity="0.35"/>
<path d="M388 205 Q 450 195 514 212" stroke="#2010a0" stroke-width="2" fill="none" filter="url(#b1)" opacity="0.35"/>
<path d="M400 250 Q 460 265 514 330" stroke="#2010a0" stroke-width="2" fill="none" filter="url(#b1)" opacity="0.35"/>
<path d="M440 290 Q 480 300 514 290" stroke="#2010a0" stroke-width="2" fill="none" filter="url(#b1)" opacity="0.35"/>
<path d="M360 60 Q 380 70 400 52" stroke="#2010a0" stroke-width="2" fill="none" filter="url(#b1)" opacity="0.35"/>
<ellipse cx="240" cy="220" rx="150" ry="210" fill="#2050ee" filter="url(#b4)"/>
<ellipse cx="240" cy="220" rx="146" ry="206" fill="none" stroke="#2a70f8" stroke-width="6" filter="url(#b2)"/>
<ellipse cx="240" cy="220" rx="160" ry="222" fill="none" stroke="#2248e8" stroke-width="10" filter="url(#b4)"/>
<ellipse cx="235" cy="180" rx="125" ry="140" fill="#2060f4" filter="url(#b8)"/>
<ellipse cx="245" cy="222" rx="90" ry="119" fill="none" stroke="#3a8cf8" stroke-width="4" stroke-dasharray="30 12 50 20" filter="url(#b2)" opacity="0.35"/>
<ellipse cx="245" cy="222" rx="112" ry="148" fill="none" stroke="#3a8cf8" stroke-width="4" stroke-dasharray="40 15 25 10 60 20" filter="url(#b2)" opacity="0.32"/>
<ellipse cx="245" cy="222" rx="133" ry="175" fill="none" stroke="#3a8cf8" stroke-width="4" stroke-dasharray="60 20 35 15" filter="url(#b2)" opacity="0.3"/>
<ellipse cx="245" cy="222" rx="152" ry="200" fill="none" stroke="#3a8cf8" stroke-width="4" stroke-dasharray="50 25 70 20" filter="url(#b2)" opacity="0.25"/>
<path d="M113 52 L514 52 L514 58 L113 62 Z" fill="#2024c8" filter="url(#b2)"/>
<path d="M113 52 L150 52 Q 125 58 113 72 Z" fill="#4010a0" filter="url(#b1)"/>
<ellipse cx="173.2" cy="136.2" rx="5.2" ry="2.7" transform="rotate(-39 173.2 136.2)" fill="#3290f8" filter="url(#b2)" opacity="0.55"/>
<ellipse cx="258.5" cy="187.2" rx="5.8" ry="2.6" transform="rotate(29 258.5 187.2)" fill="#38a0f8" filter="url(#b2)" opacity="0.55"/>
<ellipse cx="349.0" cy="125.8" rx="8.0" ry="2.5" transform="rotate(49 349.0 125.8)" fill="#38a0f8" filter="url(#b2)" opacity="0.55"/>
<ellipse cx="171.8" cy="81.2" rx="8.6" ry="2.3" transform="rotate(-26 171.8 81.2)" fill="#3290f8" filter="url(#b2)" opacity="0.55"/>
<ellipse cx="273.8" cy="69.0" rx="7.5" ry="2.7" transform="rotate(13 273.8 69.0)" fill="#2c80f6" filter="url(#b2)" opacity="0.55"/>
<ellipse cx="299.0" cy="175.3" rx="4.6" ry="2.7" transform="rotate(53 299.0 175.3)" fill="#40b8f0" filter="url(#b2)" opacity="0.55"/>
<ellipse cx="283.7" cy="189.0" rx="5.4" ry="3.1" transform="rotate(55 283.7 189.0)" fill="#40b8f0" filter="url(#b2)" opacity="0.55"/>
<ellipse cx="341.7" cy="78.8" rx="5.2" ry="1.6" transform="rotate(36 341.7 78.8)" fill="#40b8f0" filter="url(#b2)" opacity="0.55"/>
<ellipse cx="168.3" cy="195.2" rx="5.6" ry="2.8" transform="rotate(-71 168.3 195.2)" fill="#2c80f6" filter="url(#b2)" opacity="0.55"/>
<ellipse cx="215.7" cy="176.7" rx="6.4" ry="2.6" transform="rotate(-29 215.7 176.7)" fill="#40b8f0" filter="url(#b2)" opacity="0.55"/>
<ellipse cx="253.5" cy="186.6" rx="7.1" ry="3.4" transform="rotate(22 253.5 186.6)" fill="#2c80f6" filter="url(#b2)" opacity="0.55"/>
<ellipse cx="347.9" cy="154.0" rx="4.0" ry="3.2" transform="rotate(59 347.9 154.0)" fill="#3290f8" filter="url(#b2)" opacity="0.55"/>
<ellipse cx="283.6" cy="89.6" rx="8.0" ry="2.6" transform="rotate(18 283.6 89.6)" fill="#2c80f6" filter="url(#b2)" opacity="0.55"/>
<ellipse cx="146.9" cy="127.5" rx="6.8" ry="2.5" transform="rotate(-45 146.9 127.5)" fill="#2c80f6" filter="url(#b2)" opacity="0.55"/>
<ellipse cx="303.7" cy="117.5" rx="3.9" ry="2.1" transform="rotate(32 303.7 117.5)" fill="#40b8f0" filter="url(#b2)" opacity="0.55"/>
<ellipse cx="320.5" cy="66.2" rx="6.7" ry="1.6" transform="rotate(28 320.5 66.2)" fill="#2c80f6" filter="url(#b2)" opacity="0.55"/>
<ellipse cx="245.8" cy="189.1" rx="4.7" ry="2.0" transform="rotate(11 245.8 189.1)" fill="#3290f8" filter="url(#b2)" opacity="0.55"/>
<ellipse cx="189.8" cy="70.8" rx="6.6" ry="1.6" transform="rotate(-19 189.8 70.8)" fill="#38a0f8" filter="url(#b2)" opacity="0.55"/>
<ellipse cx="343.4" cy="100.8" rx="4.6" ry="2.9" transform="rotate(41 343.4 100.8)" fill="#2c80f6" filter="url(#b2)" opacity="0.55"/>
<ellipse cx="190.8" cy="194.2" rx="8.4" ry="2.3" transform="rotate(-62 190.8 194.2)" fill="#40b8f0" filter="url(#b2)" opacity="0.55"/>
<ellipse cx="319.8" cy="114.1" rx="8.2" ry="2.9" transform="rotate(37 319.8 114.1)" fill="#3290f8" filter="url(#b2)" opacity="0.55"/>
<ellipse cx="261.9" cy="191.7" rx="6.0" ry="2.4" transform="rotate(38 261.9 191.7)" fill="#38a0f8" filter="url(#b2)" opacity="0.55"/>
<ellipse cx="335.3" cy="121.2" rx="4.5" ry="2.1" transform="rotate(44 335.3 121.2)" fill="#2c80f6" filter="url(#b2)" opacity="0.55"/>
<ellipse cx="120.7" cy="118.1" rx="6.5" ry="1.5" transform="rotate(-50 120.7 118.1)" fill="#38a0f8" filter="url(#b2)" opacity="0.55"/>
<ellipse cx="131.9" cy="147.8" rx="5.8" ry="2.9" transform="rotate(-56 131.9 147.8)" fill="#2c80f6" filter="url(#b2)" opacity="0.55"/>
<ellipse cx="259.3" cy="99.0" rx="5.9" ry="2.7" transform="rotate(9 259.3 99.0)" fill="#3290f8" filter="url(#b2)" opacity="0.55"/>
<ellipse cx="341.5" cy="95.2" rx="5.7" ry="2.7" transform="rotate(39 341.5 95.2)" fill="#2c80f6" filter="url(#b2)" opacity="0.55"/>
<ellipse cx="159.2" cy="85.9" rx="7.5" ry="3.2" transform="rotate(-31 159.2 85.9)" fill="#2c80f6" filter="url(#b2)" opacity="0.55"/>
<ellipse cx="187.7" cy="112.8" rx="7.6" ry="1.6" transform="rotate(-26 187.7 112.8)" fill="#38a0f8" filter="url(#b2)" opacity="0.55"/>
<ellipse cx="189.9" cy="91.2" rx="7.8" ry="2.0" transform="rotate(-21 189.9 91.2)" fill="#38a0f8" filter="url(#b2)" opacity="0.55"/>
<ellipse cx="275.3" cy="150.9" rx="3.6" ry="2.7" transform="rotate(27 275.3 150.9)" fill="#2c80f6" filter="url(#b2)" opacity="0.55"/>
<ellipse cx="274.6" cy="91.4" rx="7.9" ry="3.4" transform="rotate(15 274.6 91.4)" fill="#3290f8" filter="url(#b2)" opacity="0.55"/>
<ellipse cx="196.1" cy="151.0" rx="8.3" ry="2.4" transform="rotate(-32 196.1 151.0)" fill="#38a0f8" filter="url(#b2)" opacity="0.55"/>
<ellipse cx="300.6" cy="64.7" rx="8.7" ry="2.1" transform="rotate(21 300.6 64.7)" fill="#38a0f8" filter="url(#b2)" opacity="0.55"/>
<ellipse cx="318.4" cy="107.6" rx="8.0" ry="1.7" transform="rotate(35 318.4 107.6)" fill="#2c80f6" filter="url(#b2)" opacity="0.55"/>
<ellipse cx="254.8" cy="119.0" rx="6.1" ry="3.2" transform="rotate(8 254.8 119.0)" fill="#40b8f0" filter="url(#b2)" opacity="0.55"/>
<ellipse cx="198.4" cy="118.4" rx="5.5" ry="2.3" transform="rotate(-22 198.4 118.4)" fill="#40b8f0" filter="url(#b2)" opacity="0.55"/>
<ellipse cx="154.2" cy="60.7" rx="8.7" ry="3.3" transform="rotate(-28 154.2 60.7)" fill="#40b8f0" filter="url(#b2)" opacity="0.55"/>
<ellipse cx="247.7" cy="198.0" rx="7.3" ry="1.6" transform="rotate(19 247.7 198.0)" fill="#40b8f0" filter="url(#b2)" opacity="0.55"/>
<ellipse cx="312.1" cy="152.8" rx="6.1" ry="2.1" transform="rotate(47 312.1 152.8)" fill="#2c80f6" filter="url(#b2)" opacity="0.55"/>
<ellipse cx="324.4" cy="180.6" rx="8.1" ry="3.4" transform="rotate(65 324.4 180.6)" fill="#3290f8" filter="url(#b2)" opacity="0.55"/>
<ellipse cx="306.0" cy="66.3" rx="8.4" ry="2.9" transform="rotate(23 306.0 66.3)" fill="#38a0f8" filter="url(#b2)" opacity="0.55"/>
<ellipse cx="326.0" cy="186.0" rx="6.5" ry="1.5" transform="rotate(68 326.0 186.0)" fill="#3290f8" filter="url(#b2)" opacity="0.55"/>
<ellipse cx="157.9" cy="102.0" rx="7.0" ry="2.5" transform="rotate(-35 157.9 102.0)" fill="#40b8f0" filter="url(#b2)" opacity="0.55"/>
<ellipse cx="130.4" cy="187.8" rx="3.7" ry="1.8" transform="rotate(-74 130.4 187.8)" fill="#40b8f0" filter="url(#b2)" opacity="0.55"/>
<ellipse cx="156" cy="123" rx="2.5" ry="3" fill="#30d060" filter="url(#b1)"/>
<ellipse cx="273" cy="92" rx="5" ry="3" fill="#30c070" filter="url(#b1)"/>
<ellipse cx="290" cy="100" rx="3" ry="2" fill="#30c870" filter="url(#b1)"/>
<path d="M113 260 L250 212 L255 353 L113 353 Z" fill="#2898f4" filter="url(#b2)"/>
<path d="M140 330 L235 250 L240 353 L113 353 Z" fill="#34b4f0" filter="url(#b4)"/>
<ellipse cx="135" cy="350" rx="30" ry="12" fill="#38c8b8" filter="url(#b4)"/>
<path d="M113 201 L160 198 L193 193 L219 196 L242 203 L252 213 L239 230 L209 256 L176 279 L143 302 L113 326 Z" fill="#2e1cb4" filter="url(#b05)"/>
<ellipse cx="245" cy="210" rx="16" ry="12" fill="#1a48e8" filter="url(#b4)"/>
<path d="M383 249 Q 370 300 362 353 L438 353 Z" fill="#3a10a8" filter="url(#b1)"/>
<path d="M386 250 L440 353 L452 353 Z" fill="#2450e8" filter="url(#b2)" opacity="0.7"/>
<path d="M163 193 L165 178 L170 162 L185 152 L200 149 L207 135 L215 126 L229 124 L243 131 L254.6 135 L268.8 132 L283 132 L291.5 143.6 L297 155 L308.5 163 L319.8 172 L330 183 L334 200 L336 218 L334 240 L322 261 L307 276 L289 289 L274 294 L266 303 L258 316 L255 332 L254 353 L236 353 L233 322 L230.5 296 L230.5 271 L232 250 L240 236 L250 230 L258 225 L264 218 L258 198 L256 189 L238 192 L220 189 L200 195 L188 196 Z" fill="none" stroke="#30c8c0" stroke-width="3" filter="url(#b1)"/>
<path d="M163 193 L165 178 L170 162 L185 152 L200 149 L207 135 L215 126 L229 124 L243 131 L254.6 135 L268.8 132 L283 132 L291.5 143.6 L297 155 L308.5 163 L319.8 172 L330 183 L334 200 L336 218 L334 240 L322 261 L307 276 L289 289 L274 294 L266 303 L258 316 L255 332 L254 353 L236 353 L233 322 L230.5 296 L230.5 271 L232 250 L240 236 L250 230 L258 225 L264 218 L258 198 L256 189 L238 192 L220 189 L200 195 L188 196 Z" fill="#20c828" filter="url(#b05)"/>
<clipPath id="blobclip"><path d="M163 193 L165 178 L170 162 L185 152 L200 149 L207 135 L215 126 L229 124 L243 131 L254.6 135 L268.8 132 L283 132 L291.5 143.6 L297 155 L308.5 163 L319.8 172 L330 183 L334 200 L336 218 L334 240 L322 261 L307 276 L289 289 L274 294 L266 303 L258 316 L255 332 L254 353 L236 353 L233 322 L230.5 296 L230.5 271 L232 250 L240 236 L250 230 L258 225 L264 218 L258 198 L256 189 L238 192 L220 189 L200 195 L188 196 Z"/></clipPath>
<g clip-path="url(#blobclip)">
<path d="M163 193 L165 178 L170 162 L185 152 L200 149 L207 135 L215 126 L229 124 L243 131 L254.6 135 L268.8 132 L283 132 L291.5 143.6 L297 155 L308.5 163 L319.8 172 L330 183 L334 200 L336 218 L334 240 L322 261 L307 276 L289 289 L274 294 L266 303 L258 316 L255 332 L254 353 L236 353 L233 322 L230.5 296 L230.5 271 L232 250 L240 236 L250 230 L258 225 L264 218 L258 198 L256 189 L238 192 L220 189 L200 195 L188 196 Z" fill="none" stroke="#18b828" stroke-width="5" filter="url(#b1)"/>
<ellipse cx="228" cy="134" rx="15" ry="7" fill="#a8e410" filter="url(#b2)"/>
<ellipse cx="274" cy="137" rx="9" ry="5" fill="#98e010" filter="url(#b2)"/>
<ellipse cx="190" cy="175" rx="6" ry="4" fill="#30c8a0" filter="url(#b2)"/>
<ellipse cx="215" cy="185" rx="5" ry="3" fill="#30c0a0" filter="url(#b2)"/>
<ellipse cx="240" cy="150" rx="5" ry="3" fill="#18b040" filter="url(#b1)"/>
<ellipse cx="280" cy="168" rx="26" ry="14" fill="#b0ec00" filter="url(#b4)"/>
<ellipse cx="266" cy="169" rx="4" ry="3" fill="#ff9000" filter="url(#b1)"/>
<ellipse cx="200" cy="175" rx="12" ry="8" fill="#40d020" filter="url(#b4)"/>
<ellipse cx="185" cy="185" rx="8" ry="5" fill="#70dc10" filter="url(#b2)"/>
<ellipse cx="222" cy="160" rx="10" ry="6" fill="#60d818" filter="url(#b2)"/>
<ellipse cx="300" cy="205" rx="30" ry="42" fill="#d8f000" filter="url(#b4)"/>
<ellipse cx="285" cy="255" rx="34" ry="18" fill="#c8f000" filter="url(#b4)"/>
<ellipse cx="262" cy="270" rx="12" ry="20" fill="#80e010" filter="url(#b4)"/>
<ellipse cx="240" cy="335" rx="9" ry="22" fill="#30c898" filter="url(#b3)"/>
<ellipse cx="248" cy="318" rx="6" ry="12" fill="#40d040" filter="url(#b2)"/>
<ellipse cx="265" cy="200" rx="8" ry="10" fill="#e0f000" filter="url(#b2)"/>
</g>
<path d="M299 178 L320 176 L329 195 L331 215 L329 237 L320 249 L305 246 L296 240 L292 240 L278 245 L262 250 L250 240 L258 226 L276 214 L292 209 L298 200 Z" fill="#ff8a00" filter="url(#b2)"/>
<path d="M301 182 L318 180 L325 195 L327 215 L325 235 L318 245 L305 240 L300 230 L292 232 L278 235 L265 240 L256 233 L265 225 L278 218 L293 213 L300 205 Z" fill="#ff2400" filter="url(#b1)"/>
<ellipse cx="314" cy="210" rx="7" ry="18" fill="#ff0010" filter="url(#b2)"/>
<ellipse cx="278" cy="224" rx="6" ry="5" fill="#ff0030" filter="url(#b1)"/>
</g>
<line x1="155" y1="142" x2="197" y2="116" stroke="#c0d8ff" stroke-width="1.1" stroke-dasharray="1.2,1.6"/>
<rect x="149" y="108" width="33" height="12" fill="#fff" stroke="#202030" stroke-width="0.8"/>
<text x="151.2" y="116.8" font-size="7.6" textLength="28.6" lengthAdjust="spacingAndGlyphs" font-family="Liberation Sans" fill="#c83030" stroke="#c83030" stroke-width="0.15">1090.1 °C</text>
<path d="M196 114 H202 M199 111 V117" stroke="#f8e0ec" stroke-width="1.6"/>
<circle cx="199" cy="114" r="1" fill="#e07090"/>
<rect x="258.5" y="182" width="50.5" height="29.4" fill="none" stroke="#f0fff0" stroke-width="0.9" stroke-dasharray="1.2,1.6"/>
<rect x="270.5" y="192" width="33.5" height="12" fill="#fff" stroke="#202030" stroke-width="0.8"/>
<text x="272.7" y="200.8" font-size="7.6" textLength="29.1" lengthAdjust="spacingAndGlyphs" font-family="Liberation Sans" fill="#c83030" stroke="#c83030" stroke-width="0.15">1601,3 °C</text>
<path d="M305 210 H311 M308 207 V213" stroke="#f8e0ec" stroke-width="1.6"/>
<circle cx="308" cy="210" r="1" fill="#e07090"/>
<rect x="248" y="277" width="17" height="11" fill="none" stroke="#f0fff0" stroke-width="0.9" stroke-dasharray="1.2,1.6"/>
<rect x="243" y="289" width="33" height="12" fill="#fff" stroke="#202030" stroke-width="0.8"/>
<text x="245.2" y="297.8" font-size="7.6" textLength="28.6" lengthAdjust="spacingAndGlyphs" font-family="Liberation Sans" fill="#c83030" stroke="#c83030" stroke-width="0.15">1350,3 °C</text>
<path d="M253 284 H259 M256 281 V287" stroke="#f8e0ec" stroke-width="1.6"/>
<circle cx="256" cy="284" r="1" fill="#e07090"/>
<rect x="161" y="322" width="21" height="18" fill="none" stroke="#e0f0ff" stroke-width="0.9" stroke-dasharray="1.2,1.6"/>
<rect x="158" y="307" width="33" height="12" fill="#fff" stroke="#202030" stroke-width="0.8"/>
<text x="160.2" y="315.8" font-size="7.6" textLength="28.6" lengthAdjust="spacingAndGlyphs" font-family="Liberation Sans" fill="#c83030" stroke="#c83030" stroke-width="0.15">1199,3 °C</text>
<path d="M175 339 H181 M178 336 V342" stroke="#f8e0ec" stroke-width="1.6"/>
<circle cx="178" cy="339" r="1" fill="#e07090"/>
</svg>
<svg style="left:572px;top:52px" width="401" height="301" viewBox="572 52 401 301">
<defs><clipPath id="rc"><rect x="572" y="52" width="401" height="301"/></clipPath></defs><g clip-path="url(#rc)">
<rect x="560" y="40" width="430" height="330" fill="#1a1a1a"/>
<path d="M355 52 Q 395 120 430 200 T 514 320" transform="translate(459,0)" stroke="#0c0c0c" stroke-width="1.8" fill="none" filter="url(#b1)" opacity="0.3"/>
<path d="M385 52 Q 425 115 465 175 T 514 240" transform="translate(459,0)" stroke="#0c0c0c" stroke-width="1.8" fill="none" filter="url(#b1)" opacity="0.3"/>
<path d="M425 52 Q 465 100 514 160" transform="translate(459,0)" stroke="#0c0c0c" stroke-width="1.8" fill="none" filter="url(#b1)" opacity="0.3"/>
<path d="M470 52 Q 490 80 514 100" transform="translate(459,0)" stroke="#0c0c0c" stroke-width="1.8" fill="none" filter="url(#b1)" opacity="0.3"/>
<path d="M370 90 Q 440 100 514 90" transform="translate(459,0)" stroke="#0c0c0c" stroke-width="1.8" fill="none" filter="url(#b1)" opacity="0.3"/>
<path d="M390 160 Q 450 150 514 130" transform="translate(459,0)" stroke="#0c0c0c" stroke-width="1.8" fill="none" filter="url(#b1)" opacity="0.3"/>
<path d="M388 205 Q 450 195 514 212" transform="translate(459,0)" stroke="#0c0c0c" stroke-width="1.8" fill="none" filter="url(#b1)" opacity="0.3"/>
<path d="M400 250 Q 460 265 514 330" transform="translate(459,0)" stroke="#0c0c0c" stroke-width="1.8" fill="none" filter="url(#b1)" opacity="0.3"/>
<path d="M440 290 Q 480 300 514 290" transform="translate(459,0)" stroke="#0c0c0c" stroke-width="1.8" fill="none" filter="url(#b1)" opacity="0.3"/>
<path d="M360 60 Q 380 70 400 52" transform="translate(459,0)" stroke="#0c0c0c" stroke-width="1.8" fill="none" filter="url(#b1)" opacity="0.3"/>
<ellipse cx="705" cy="212" rx="150" ry="162" fill="#262626" filter="url(#b4)"/>
<ellipse cx="712" cy="215" rx="128" ry="150" fill="none" stroke="#2e2e2e" stroke-width="8" filter="url(#b2)"/>
<path d="M800 120 Q 840 200 835 280 Q 825 330 800 353" fill="none" stroke="#383838" stroke-width="22" filter="url(#b4)"/>
<path d="M572 52 L973 52 L973 58 L572 62 Z" fill="#121212" filter="url(#b2)"/>
<ellipse cx="694.2" cy="94.9" rx="7.0" ry="3.4" transform="rotate(356 694.2 94.9)" fill="rgb(91,91,91)" filter="url(#b2)" opacity="0.8"/>
<ellipse cx="766.4" cy="145.4" rx="5.3" ry="3.4" transform="rotate(402 766.4 145.4)" fill="rgb(91,91,91)" filter="url(#b2)" opacity="0.8"/>
<ellipse cx="601.5" cy="219.9" rx="4.9" ry="3.2" transform="rotate(269 601.5 219.9)" fill="rgb(74,74,74)" filter="url(#b2)" opacity="0.8"/>
<ellipse cx="670.7" cy="105.0" rx="3.1" ry="1.9" transform="rotate(344 670.7 105.0)" fill="rgb(67,67,67)" filter="url(#b2)" opacity="0.8"/>
<ellipse cx="583.4" cy="176.7" rx="4.9" ry="3.0" transform="rotate(289 583.4 176.7)" fill="rgb(54,54,54)" filter="url(#b2)" opacity="0.8"/>
<ellipse cx="588.0" cy="192.8" rx="3.6" ry="1.5" transform="rotate(282 588.0 192.8)" fill="rgb(50,50,50)" filter="url(#b2)" opacity="0.8"/>
<ellipse cx="607.6" cy="177.1" rx="7.9" ry="3.2" transform="rotate(293 607.6 177.1)" fill="rgb(68,68,68)" filter="url(#b2)" opacity="0.8"/>
<ellipse cx="622.7" cy="152.6" rx="7.4" ry="2.8" transform="rotate(309 622.7 152.6)" fill="rgb(61,61,61)" filter="url(#b2)" opacity="0.8"/>
<ellipse cx="786.2" cy="132.0" rx="7.8" ry="3.3" transform="rotate(405 786.2 132.0)" fill="rgb(69,69,69)" filter="url(#b2)" opacity="0.8"/>
<ellipse cx="593.0" cy="229.1" rx="7.7" ry="2.0" transform="rotate(264 593.0 229.1)" fill="rgb(71,71,71)" filter="url(#b2)" opacity="0.8"/>
<ellipse cx="609.4" cy="146.5" rx="3.0" ry="2.9" transform="rotate(307 609.4 146.5)" fill="rgb(71,71,71)" filter="url(#b2)" opacity="0.8"/>
<ellipse cx="594.6" cy="215.9" rx="4.5" ry="2.9" transform="rotate(271 594.6 215.9)" fill="rgb(61,61,61)" filter="url(#b2)" opacity="0.8"/>
<ellipse cx="650.7" cy="107.7" rx="3.3" ry="3.5" transform="rotate(335 650.7 107.7)" fill="rgb(51,51,51)" filter="url(#b2)" opacity="0.8"/>
<ellipse cx="779.6" cy="142.1" rx="5.0" ry="2.6" transform="rotate(406 779.6 142.1)" fill="rgb(76,76,76)" filter="url(#b2)" opacity="0.8"/>
<ellipse cx="623.4" cy="132.0" rx="3.0" ry="1.6" transform="rotate(317 623.4 132.0)" fill="rgb(61,61,61)" filter="url(#b2)" opacity="0.8"/>
<ellipse cx="694.0" cy="87.3" rx="3.6" ry="2.0" transform="rotate(356 694.0 87.3)" fill="rgb(79,79,79)" filter="url(#b2)" opacity="0.8"/>
<ellipse cx="624.3" cy="142.3" rx="5.6" ry="3.1" transform="rotate(314 624.3 142.3)" fill="rgb(56,56,56)" filter="url(#b2)" opacity="0.8"/>
<ellipse cx="683.4" cy="94.7" rx="4.8" ry="2.1" transform="rotate(351 683.4 94.7)" fill="rgb(77,77,77)" filter="url(#b2)" opacity="0.8"/>
<ellipse cx="772.3" cy="148.1" rx="4.7" ry="2.7" transform="rotate(406 772.3 148.1)" fill="rgb(59,59,59)" filter="url(#b2)" opacity="0.8"/>
<ellipse cx="608.9" cy="129.4" rx="5.7" ry="2.1" transform="rotate(313 608.9 129.4)" fill="rgb(70,70,70)" filter="url(#b2)" opacity="0.8"/>
<ellipse cx="604.9" cy="141.1" rx="6.1" ry="2.9" transform="rotate(308 604.9 141.1)" fill="rgb(69,69,69)" filter="url(#b2)" opacity="0.8"/>
<ellipse cx="782.9" cy="156.9" rx="3.2" ry="3.5" transform="rotate(413 782.9 156.9)" fill="rgb(84,84,84)" filter="url(#b2)" opacity="0.8"/>
<ellipse cx="766.7" cy="145.5" rx="6.7" ry="2.2" transform="rotate(402 766.7 145.5)" fill="rgb(66,66,66)" filter="url(#b2)" opacity="0.8"/>
<ellipse cx="648.3" cy="120.3" rx="3.3" ry="3.3" transform="rotate(331 648.3 120.3)" fill="rgb(52,52,52)" filter="url(#b2)" opacity="0.8"/>
<ellipse cx="744.8" cy="118.3" rx="4.0" ry="3.5" transform="rotate(384 744.8 118.3)" fill="rgb(86,86,86)" filter="url(#b2)" opacity="0.8"/>
<ellipse cx="786.7" cy="135.5" rx="6.9" ry="1.7" transform="rotate(406 786.7 135.5)" fill="rgb(77,77,77)" filter="url(#b2)" opacity="0.8"/>
<ellipse cx="637.1" cy="144.4" rx="5.1" ry="1.8" transform="rotate(318 637.1 144.4)" fill="rgb(89,89,89)" filter="url(#b2)" opacity="0.8"/>
<ellipse cx="769.3" cy="105.5" rx="5.3" ry="2.5" transform="rotate(391 769.3 105.5)" fill="rgb(70,70,70)" filter="url(#b2)" opacity="0.8"/>
<ellipse cx="656.4" cy="121.3" rx="5.0" ry="1.8" transform="rotate(334 656.4 121.3)" fill="rgb(74,74,74)" filter="url(#b2)" opacity="0.8"/>
<ellipse cx="753.2" cy="114.5" rx="3.9" ry="3.4" transform="rotate(387 753.2 114.5)" fill="rgb(71,71,71)" filter="url(#b2)" opacity="0.8"/>
<ellipse cx="595.6" cy="181.6" rx="5.6" ry="2.6" transform="rotate(289 595.6 181.6)" fill="rgb(82,82,82)" filter="url(#b2)" opacity="0.8"/>
<ellipse cx="617.3" cy="127.7" rx="6.9" ry="2.9" transform="rotate(316 617.3 127.7)" fill="rgb(92,92,92)" filter="url(#b2)" opacity="0.8"/>
<ellipse cx="596.5" cy="225.0" rx="5.8" ry="2.8" transform="rotate(266 596.5 225.0)" fill="rgb(81,81,81)" filter="url(#b2)" opacity="0.8"/>
<ellipse cx="591.8" cy="149.0" rx="6.6" ry="3.4" transform="rotate(302 591.8 149.0)" fill="rgb(71,71,71)" filter="url(#b2)" opacity="0.8"/>
<ellipse cx="702.8" cy="100.4" rx="3.1" ry="2.6" transform="rotate(360 702.8 100.4)" fill="rgb(66,66,66)" filter="url(#b2)" opacity="0.8"/>
<ellipse cx="622.9" cy="148.2" rx="4.4" ry="2.5" transform="rotate(311 622.9 148.2)" fill="rgb(93,93,93)" filter="url(#b2)" opacity="0.8"/>
<ellipse cx="743.9" cy="117.4" rx="6.2" ry="3.0" transform="rotate(383 743.9 117.4)" fill="rgb(76,76,76)" filter="url(#b2)" opacity="0.8"/>
<ellipse cx="613.3" cy="128.9" rx="7.3" ry="2.9" transform="rotate(315 613.3 128.9)" fill="rgb(73,73,73)" filter="url(#b2)" opacity="0.8"/>
<ellipse cx="785.2" cy="139.8" rx="5.6" ry="1.8" transform="rotate(407 785.2 139.8)" fill="rgb(73,73,73)" filter="url(#b2)" opacity="0.8"/>
<ellipse cx="780.2" cy="136.6" rx="6.5" ry="2.9" transform="rotate(404 780.2 136.6)" fill="rgb(76,76,76)" filter="url(#b2)" opacity="0.8"/>
<ellipse cx="585.2" cy="180.9" rx="5.9" ry="2.8" transform="rotate(287 585.2 180.9)" fill="rgb(76,76,76)" filter="url(#b2)" opacity="0.8"/>
<ellipse cx="611.0" cy="147.3" rx="7.3" ry="2.0" transform="rotate(307 611.0 147.3)" fill="rgb(51,51,51)" filter="url(#b2)" opacity="0.8"/>
<ellipse cx="594.1" cy="175.9" rx="6.1" ry="1.9" transform="rotate(291 594.1 175.9)" fill="rgb(93,93,93)" filter="url(#b2)" opacity="0.8"/>
<ellipse cx="588.1" cy="178.9" rx="7.9" ry="3.5" transform="rotate(289 588.1 178.9)" fill="rgb(60,60,60)" filter="url(#b2)" opacity="0.8"/>
<ellipse cx="602.3" cy="219.3" rx="4.6" ry="1.9" transform="rotate(269 602.3 219.3)" fill="rgb(62,62,62)" filter="url(#b2)" opacity="0.8"/>
<ellipse cx="673.5" cy="110.1" rx="4.8" ry="2.8" transform="rotate(345 673.5 110.1)" fill="rgb(54,54,54)" filter="url(#b2)" opacity="0.8"/>
<ellipse cx="686.4" cy="113.8" rx="7.5" ry="1.5" transform="rotate(351 686.4 113.8)" fill="rgb(75,75,75)" filter="url(#b2)" opacity="0.8"/>
<ellipse cx="792.9" cy="130.5" rx="7.3" ry="2.9" transform="rotate(407 792.9 130.5)" fill="rgb(85,85,85)" filter="url(#b2)" opacity="0.8"/>
<ellipse cx="637.8" cy="144.8" rx="6.1" ry="1.7" transform="rotate(318 637.8 144.8)" fill="rgb(84,84,84)" filter="url(#b2)" opacity="0.8"/>
<ellipse cx="656.9" cy="95.5" rx="4.5" ry="2.2" transform="rotate(339 656.9 95.5)" fill="rgb(58,58,58)" filter="url(#b2)" opacity="0.8"/>
<ellipse cx="631.4" cy="114.7" rx="6.2" ry="2.2" transform="rotate(325 631.4 114.7)" fill="rgb(59,59,59)" filter="url(#b2)" opacity="0.8"/>
<ellipse cx="597.3" cy="189.4" rx="5.4" ry="1.9" transform="rotate(285 597.3 189.4)" fill="rgb(58,58,58)" filter="url(#b2)" opacity="0.8"/>
<ellipse cx="691.0" cy="109.1" rx="7.5" ry="1.5" transform="rotate(354 691.0 109.1)" fill="rgb(56,56,56)" filter="url(#b2)" opacity="0.8"/>
<ellipse cx="605.9" cy="133.2" rx="5.7" ry="2.2" transform="rotate(311 605.9 133.2)" fill="rgb(86,86,86)" filter="url(#b2)" opacity="0.8"/>
<ellipse cx="629.0" cy="133.9" rx="4.1" ry="2.1" transform="rotate(319 629.0 133.9)" fill="rgb(95,95,95)" filter="url(#b2)" opacity="0.8"/>
<ellipse cx="617.8" cy="118.8" rx="7.6" ry="2.7" transform="rotate(319 617.8 118.8)" fill="rgb(66,66,66)" filter="url(#b2)" opacity="0.8"/>
<ellipse cx="728.2" cy="113.7" rx="4.3" ry="1.5" transform="rotate(374 728.2 113.7)" fill="rgb(69,69,69)" filter="url(#b2)" opacity="0.8"/>
<ellipse cx="659.7" cy="120.0" rx="5.4" ry="1.7" transform="rotate(336 659.7 120.0)" fill="rgb(89,89,89)" filter="url(#b2)" opacity="0.8"/>
<ellipse cx="779.0" cy="147.3" rx="3.2" ry="1.8" transform="rotate(408 779.0 147.3)" fill="rgb(75,75,75)" filter="url(#b2)" opacity="0.8"/>
<ellipse cx="589.2" cy="232.1" rx="4.4" ry="3.4" transform="rotate(263 589.2 232.1)" fill="rgb(52,52,52)" filter="url(#b2)" opacity="0.8"/>
<ellipse cx="610.4" cy="167.1" rx="3.8" ry="3.5" transform="rotate(299 610.4 167.1)" fill="rgb(68,68,68)" filter="url(#b2)" opacity="0.8"/>
<ellipse cx="649.9" cy="96.8" rx="5.6" ry="3.2" transform="rotate(336 649.9 96.8)" fill="rgb(57,57,57)" filter="url(#b2)" opacity="0.8"/>
<ellipse cx="603.2" cy="229.5" rx="4.4" ry="2.9" transform="rotate(263 603.2 229.5)" fill="rgb(89,89,89)" filter="url(#b2)" opacity="0.8"/>
<ellipse cx="610.6" cy="149.3" rx="5.3" ry="2.2" transform="rotate(306 610.6 149.3)" fill="rgb(87,87,87)" filter="url(#b2)" opacity="0.8"/>
<ellipse cx="608.7" cy="199.0" rx="5.8" ry="2.9" transform="rotate(281 608.7 199.0)" fill="rgb(56,56,56)" filter="url(#b2)" opacity="0.8"/>
<ellipse cx="770.4" cy="124.9" rx="3.1" ry="3.1" transform="rotate(397 770.4 124.9)" fill="rgb(77,77,77)" filter="url(#b2)" opacity="0.8"/>
<ellipse cx="685.5" cy="97.7" rx="7.8" ry="2.8" transform="rotate(352 685.5 97.7)" fill="rgb(74,74,74)" filter="url(#b2)" opacity="0.8"/>
<ellipse cx="649.5" cy="109.2" rx="6.6" ry="3.3" transform="rotate(334 649.5 109.2)" fill="rgb(79,79,79)" filter="url(#b2)" opacity="0.8"/>
<ellipse cx="747.7" cy="130.4" rx="7.2" ry="2.9" transform="rotate(388 747.7 130.4)" fill="rgb(77,77,77)" filter="url(#b2)" opacity="0.8"/>
<ellipse cx="681.7" cy="99.8" rx="5.4" ry="2.1" transform="rotate(350 681.7 99.8)" fill="rgb(60,60,60)" filter="url(#b2)" opacity="0.8"/>
<ellipse cx="734" cy="92" rx="8" ry="3" fill="rgb(110,110,110)" filter="url(#b1)"/>
<ellipse cx="612" cy="121" rx="5" ry="6" fill="rgb(120,120,120)" filter="url(#b1)"/>
<ellipse cx="780" cy="110" rx="6" ry="3" fill="rgb(95,95,95)" filter="url(#b1)"/>
<ellipse cx="650" cy="95" rx="6" ry="3" fill="rgb(80,80,80)" filter="url(#b1)"/>
<ellipse cx="700" cy="80" rx="7" ry="3" fill="rgb(75,75,75)" filter="url(#b1)"/>
<ellipse cx="760" cy="130" rx="4" ry="3" fill="rgb(90,90,90)" filter="url(#b1)"/>
<ellipse cx="600" cy="150" rx="4" ry="5" fill="rgb(85,85,85)" filter="url(#b1)"/>
<path d="M625 185 L640 160 L667 125 L690 135 L715 128 L745 145 L770 167 L785 185 L791 210 L792 235 L788 252 L770 280 L758 294 L735 305 L716 318 L712 340 L709 355 L568 355 L568 320 L640 250 L640 200 L612 200 Z" fill="#a8a8a8" filter="url(#b1)"/>
<path d="M572 310 L690 245 L712 318 L709 355 L572 355 Z" fill="#8c8c8c" filter="url(#b8)"/>
<ellipse cx="760" cy="222" rx="28" ry="38" fill="#e4e4e4" filter="url(#b4)"/>
<ellipse cx="728" cy="188" rx="36" ry="24" fill="#d4d4d4" filter="url(#b4)"/><ellipse cx="680" cy="150" rx="18" ry="14" fill="#bcbcbc" filter="url(#b4)"/>
<ellipse cx="750" cy="175" rx="18" ry="18" fill="#c8c8c8" filter="url(#b4)"/>
<ellipse cx="655" cy="190" rx="22" ry="12" fill="#bcbcbc" filter="url(#b4)"/>
<ellipse cx="725" cy="265" rx="25" ry="22" fill="#b8b8b8" filter="url(#b4)"/>
<linearGradient id="lg1" x1="0" y1="0" x2="1" y2="0"><stop offset="0" stop-color="#121212"/><stop offset="1" stop-color="#282828"/></linearGradient>
<path d="M568 200 L620 195 L679 191 L705 200 L722 215 L697 240 L640 282 L568 329 Z" fill="#131313" filter="url(#b1)"/>
<path d="M843 246 Q 836 300 834 353 L897 353 Z" fill="#0a0a0a" filter="url(#b1)"/>
</g></svg>
<div style="position:absolute;left:86px;top:355px;width:914px;height:2px;background:#f0f0f0;"></div>
<div style="position:absolute;left:86px;top:357px;width:914px;height:12px;background:linear-gradient(#d4e0ec,#c4d4e4);"></div>
<div style="position:absolute;left:88px;top:357.50px;font-size:7px;line-height:11px;color:#5a6470;font-weight:normal;white-space:nowrap;transform:scaleX(0.897);transform-origin:0 50%;-webkit-text-stroke:0.15px #5a6470;">VOI Trendprofile</div>
<div style="position:absolute;left:987px;top:360px;width:3px;height:6px;background:#707070;border-radius:1px;"></div>
<div style="position:absolute;left:994px;top:358px;font-size:7px;line-height:9px;color:#222;font-weight:normal;white-space:nowrap;">&#x2715;</div>
<div style="position:absolute;left:86px;top:369px;width:914px;height:2px;background:#b0b0b0;"></div>
<div style="position:absolute;left:88px;top:371px;width:912px;height:134px;background:#f6f6f6;border-left:1px solid #a0a0a0;"></div>
<div style="position:absolute;left:137px;top:373.00px;font-size:7px;line-height:11px;color:#202020;font-weight:normal;white-space:nowrap;transform:scaleX(0.873);transform-origin:0 50%;-webkit-text-stroke:0.15px #202020;">60 Sekunden</div>
<div style="position:absolute;left:177px;top:375px;font-size:5px;line-height:7px;color:#222;font-weight:normal;white-space:nowrap;">&#9662;</div>
<svg style="left:91px;top:374px;opacity:0.85" width="10" height="9" viewBox="0 0 16 16"><path d="M2 4 L9 2 L14 6 L12 13 L4 13 Z" fill="#d0b050" stroke="#907020"/><path d="M5 7 H11" stroke="#f8e8a0"/></svg>
<div style="position:absolute;left:106px;top:372px;width:11px;height:12px;background:#e4f0fc;border:1px solid #98b8dc;"></div>
<svg style="left:107px;top:374px;opacity:0.85" width="10" height="9" viewBox="0 0 16 16"><path d="M8 1 L12 5 H4 Z M8 15 L12 11 H4 Z" fill="#5070b0"/><rect x="7" y="5" width="2" height="6" fill="#5070b0"/></svg>
<svg style="left:121px;top:374px;opacity:0.85" width="10" height="9" viewBox="0 0 16 16"><rect x="1" y="7" width="8" height="7" fill="#a8c0d8" stroke="#5878a0"/><rect x="7" y="2" width="8" height="7" fill="#c0d8a0" stroke="#688050"/></svg>
<div style="position:absolute;left:184px;top:372px;width:1px;height:12px;background:#d4d4d4;border-right:1px solid #fff;"></div>
<svg style="left:187px;top:374px;opacity:0.85" width="10" height="9" viewBox="0 0 16 16"><rect x="1" y="7" width="8" height="7" fill="#a8c0d8" stroke="#5878a0"/><rect x="7" y="2" width="8" height="7" fill="#c0d8a0" stroke="#688050"/></svg>
<svg style="left:199px;top:374px;opacity:0.85" width="10" height="9" viewBox="0 0 16 16"><rect x="1" y="7" width="8" height="7" fill="#a8c0d8" stroke="#5878a0"/><rect x="7" y="2" width="8" height="7" fill="#c0d8a0" stroke="#688050"/></svg>
<div style="position:absolute;left:212px;top:372px;width:1px;height:12px;background:#d4d4d4;border-right:1px solid #fff;"></div>
<svg style="left:214px;top:374px;opacity:0.85" width="9" height="9" viewBox="0 0 16 16"><path d="M3 13 L8 3 L13 13 Z" fill="#dcdcdc" stroke="#c0c0c0"/><path d="M8 9 V14" stroke="#c0c0c0" stroke-width="2"/></svg>
<svg style="left:309px;top:374px;opacity:0.85" width="9" height="9" viewBox="0 0 16 16"><path d="M2 2 H10 V10 H2 Z" fill="#e4e4e4" stroke="#c8c8c8"/><path d="M6 6 H14 V14 H6 Z" fill="#dcdcdc" stroke="#c4c4c4"/></svg>
<div style="position:absolute;left:320px;top:372px;width:1px;height:12px;background:#d4d4d4;border-right:1px solid #fff;"></div>
<svg style="left:323px;top:374px;opacity:0.85" width="10" height="9" viewBox="0 0 16 16"><path d="M1 8 Q8 1 15 8 Q8 15 1 8 Z" fill="#4080e0" stroke="#2050b0"/><circle cx="8" cy="8" r="2.5" fill="#b0d0ff"/></svg>
<div style="position:absolute;left:335px;top:372px;width:1px;height:12px;background:#d4d4d4;border-right:1px solid #fff;"></div>
<svg style="left:338px;top:374px;opacity:0.85" width="10" height="9" viewBox="0 0 16 16"><rect x="2" y="2" width="12" height="12" fill="#f0f4f0" stroke="#608868"/><path d="M4 11 L7 7 L9 9 L12 5" fill="none" stroke="#407050" stroke-width="1.4"/></svg>
<div style="position:absolute;left:351px;top:372px;width:1px;height:12px;background:#d4d4d4;border-right:1px solid #fff;"></div>
<svg style="left:353px;top:374px;opacity:0.85" width="10" height="9" viewBox="0 0 16 16"><rect x="2" y="2" width="12" height="12" fill="#f8f0f0" stroke="#b86060"/><rect x="2" y="2" width="12" height="3" fill="#e07070"/><path d="M4 10 H12" stroke="#808080"/></svg>
<div style="position:absolute;left:366px;top:372px;width:1px;height:12px;background:#d4d4d4;border-right:1px solid #fff;"></div>
<svg style="left:367px;top:374px;opacity:1" width="9" height="9" viewBox="0 0 16 16"><path d="M3 3 L13 13 M13 3 L3 13" stroke="#202020" stroke-width="2.2"/></svg>
<div style="position:absolute;left:379px;top:372px;width:1px;height:12px;background:#d4d4d4;border-right:1px solid #fff;"></div>
<svg style="left:383px;top:374px;opacity:0.85" width="10" height="9" viewBox="0 0 16 16"><rect x="1" y="6" width="10" height="9" fill="#e8eef8" stroke="#5870b0"/><path d="M6 2 H14 V10 H6 Z" fill="#5070c0" stroke="#304890"/></svg>
<div style="position:absolute;left:230px;top:376px;width:74px;height:5px;background:#f4f4f4;border:1px solid #d0d0d0;border-radius:2px;"></div>
<svg style="left:88px;top:383px" width="912" height="122" viewBox="88 383 912 122">
<rect x="113" y="398" width="860" height="96" fill="#fff" stroke="#d8d8d8" stroke-width="1"/>
<line x1="113" y1="413.5" x2="973" y2="413.5" stroke="#d8d8d8" stroke-width="1"/>
<line x1="109" y1="413.5" x2="113" y2="413.5" stroke="#666" stroke-width="1"/>
<text x="107.3" y="415.9" font-size="6.8" text-anchor="end" textLength="16.5" lengthAdjust="spacingAndGlyphs" font-family="Liberation Sans" fill="#282828" stroke="#282828" stroke-width="0.12">1800,0</text>
<line x1="113" y1="433.5" x2="973" y2="433.5" stroke="#d8d8d8" stroke-width="1"/>
<line x1="109" y1="433.5" x2="113" y2="433.5" stroke="#666" stroke-width="1"/>
<text x="107.3" y="435.9" font-size="6.8" text-anchor="end" textLength="16.5" lengthAdjust="spacingAndGlyphs" font-family="Liberation Sans" fill="#282828" stroke="#282828" stroke-width="0.12">1600,0</text>
<line x1="113" y1="452.5" x2="973" y2="452.5" stroke="#d8d8d8" stroke-width="1"/>
<line x1="109" y1="452.5" x2="113" y2="452.5" stroke="#666" stroke-width="1"/>
<text x="107.3" y="454.9" font-size="6.8" text-anchor="end" textLength="16.5" lengthAdjust="spacingAndGlyphs" font-family="Liberation Sans" fill="#282828" stroke="#282828" stroke-width="0.12">1400,0</text>
<line x1="113" y1="472.5" x2="973" y2="472.5" stroke="#d8d8d8" stroke-width="1"/>
<line x1="109" y1="472.5" x2="113" y2="472.5" stroke="#666" stroke-width="1"/>
<text x="107.3" y="474.9" font-size="6.8" text-anchor="end" textLength="16.5" lengthAdjust="spacingAndGlyphs" font-family="Liberation Sans" fill="#282828" stroke="#282828" stroke-width="0.12">1200,0</text>
<line x1="112.5" y1="494" x2="112.5" y2="497" stroke="#666" stroke-width="1"/>
<text x="112.5" y="501.9" font-size="6.8" text-anchor="middle" textLength="10" lengthAdjust="spacingAndGlyphs" font-family="Liberation Sans" fill="#282828" stroke="#282828" stroke-width="0.12">-60</text>
<line x1="172.5" y1="398" x2="172.5" y2="494" stroke="#d8d8d8" stroke-width="1"/>
<line x1="172.5" y1="494" x2="172.5" y2="497" stroke="#666" stroke-width="1"/>
<text x="172.5" y="501.9" font-size="6.8" text-anchor="middle" textLength="10" lengthAdjust="spacingAndGlyphs" font-family="Liberation Sans" fill="#282828" stroke="#282828" stroke-width="0.12">-55</text>
<line x1="231.5" y1="398" x2="231.5" y2="494" stroke="#d8d8d8" stroke-width="1"/>
<line x1="231.5" y1="494" x2="231.5" y2="497" stroke="#666" stroke-width="1"/>
<text x="231.5" y="501.9" font-size="6.8" text-anchor="middle" textLength="10" lengthAdjust="spacingAndGlyphs" font-family="Liberation Sans" fill="#282828" stroke="#282828" stroke-width="0.12">-50</text>
<line x1="291.5" y1="398" x2="291.5" y2="494" stroke="#d8d8d8" stroke-width="1"/>
<line x1="291.5" y1="494" x2="291.5" y2="497" stroke="#666" stroke-width="1"/>
<text x="291.5" y="501.9" font-size="6.8" text-anchor="middle" textLength="10" lengthAdjust="spacingAndGlyphs" font-family="Liberation Sans" fill="#282828" stroke="#282828" stroke-width="0.12">-45</text>
<line x1="351.5" y1="398" x2="351.5" y2="494" stroke="#d8d8d8" stroke-width="1"/>
<line x1="351.5" y1="494" x2="351.5" y2="497" stroke="#666" stroke-width="1"/>
<text x="351.5" y="501.9" font-size="6.8" text-anchor="middle" textLength="10" lengthAdjust="spacingAndGlyphs" font-family="Liberation Sans" fill="#282828" stroke="#282828" stroke-width="0.12">-40</text>
<line x1="410.5" y1="398" x2="410.5" y2="494" stroke="#d8d8d8" stroke-width="1"/>
<line x1="410.5" y1="494" x2="410.5" y2="497" stroke="#666" stroke-width="1"/>
<text x="410.5" y="501.9" font-size="6.8" text-anchor="middle" textLength="10" lengthAdjust="spacingAndGlyphs" font-family="Liberation Sans" fill="#282828" stroke="#282828" stroke-width="0.12">-35</text>
<line x1="470.5" y1="398" x2="470.5" y2="494" stroke="#d8d8d8" stroke-width="1"/>
<line x1="470.5" y1="494" x2="470.5" y2="497" stroke="#666" stroke-width="1"/>
<text x="470.5" y="501.9" font-size="6.8" text-anchor="middle" textLength="10" lengthAdjust="spacingAndGlyphs" font-family="Liberation Sans" fill="#282828" stroke="#282828" stroke-width="0.12">-30</text>
<line x1="529.5" y1="398" x2="529.5" y2="494" stroke="#d8d8d8" stroke-width="1"/>
<line x1="529.5" y1="494" x2="529.5" y2="497" stroke="#666" stroke-width="1"/>
<text x="529.5" y="501.9" font-size="6.8" text-anchor="middle" textLength="10" lengthAdjust="spacingAndGlyphs" font-family="Liberation Sans" fill="#282828" stroke="#282828" stroke-width="0.12">-25</text>
<line x1="589.5" y1="398" x2="589.5" y2="494" stroke="#d8d8d8" stroke-width="1"/>
<line x1="589.5" y1="494" x2="589.5" y2="497" stroke="#666" stroke-width="1"/>
<text x="589.5" y="501.9" font-size="6.8" text-anchor="middle" textLength="10" lengthAdjust="spacingAndGlyphs" font-family="Liberation Sans" fill="#282828" stroke="#282828" stroke-width="0.12">-20</text>
<line x1="648.5" y1="398" x2="648.5" y2="494" stroke="#d8d8d8" stroke-width="1"/>
<line x1="648.5" y1="494" x2="648.5" y2="497" stroke="#666" stroke-width="1"/>
<text x="648.5" y="501.9" font-size="6.8" text-anchor="middle" textLength="10" lengthAdjust="spacingAndGlyphs" font-family="Liberation Sans" fill="#282828" stroke="#282828" stroke-width="0.12">-15</text>
<line x1="708.5" y1="398" x2="708.5" y2="494" stroke="#d8d8d8" stroke-width="1"/>
<line x1="708.5" y1="494" x2="708.5" y2="497" stroke="#666" stroke-width="1"/>
<text x="708.5" y="501.9" font-size="6.8" text-anchor="middle" textLength="10" lengthAdjust="spacingAndGlyphs" font-family="Liberation Sans" fill="#282828" stroke="#282828" stroke-width="0.12">-10</text>
<line x1="767.5" y1="398" x2="767.5" y2="494" stroke="#d8d8d8" stroke-width="1"/>
<line x1="767.5" y1="494" x2="767.5" y2="497" stroke="#666" stroke-width="1"/>
<text x="767.5" y="501.9" font-size="6.8" text-anchor="middle" textLength="6.5" lengthAdjust="spacingAndGlyphs" font-family="Liberation Sans" fill="#282828" stroke="#282828" stroke-width="0.12">-5</text>
<line x1="827.5" y1="398" x2="827.5" y2="494" stroke="#d8d8d8" stroke-width="1"/>
<line x1="827.5" y1="494" x2="827.5" y2="497" stroke="#666" stroke-width="1"/>
<text x="827.5" y="501.9" font-size="6.8" text-anchor="middle" textLength="4.5" lengthAdjust="spacingAndGlyphs" font-family="Liberation Sans" fill="#282828" stroke="#282828" stroke-width="0.12">0</text>
<line x1="886.5" y1="398" x2="886.5" y2="494" stroke="#d8d8d8" stroke-width="1"/>
<line x1="886.5" y1="494" x2="886.5" y2="497" stroke="#666" stroke-width="1"/>
<text x="886.5" y="501.9" font-size="6.8" text-anchor="middle" textLength="4.5" lengthAdjust="spacingAndGlyphs" font-family="Liberation Sans" fill="#282828" stroke="#282828" stroke-width="0.12">5</text>
<line x1="946.5" y1="398" x2="946.5" y2="494" stroke="#d8d8d8" stroke-width="1"/>
<line x1="946.5" y1="494" x2="946.5" y2="497" stroke="#666" stroke-width="1"/>
<text x="946.5" y="501.9" font-size="6.8" text-anchor="middle" textLength="8" lengthAdjust="spacingAndGlyphs" font-family="Liberation Sans" fill="#282828" stroke="#282828" stroke-width="0.12">10</text>
<line x1="113" y1="398" x2="113" y2="497" stroke="#888" stroke-width="1"/>
<text x="454" y="391.8" font-size="6.8" textLength="157" lengthAdjust="spacingAndGlyphs" font-family="Liberation Sans" fill="#282828" stroke="#282828" stroke-width="0.12">VOI Trendprofile: 2007-07-20 09:18:01 - 60 Sekunden (0,1 %)</text>
<line x1="824.5" y1="398" x2="824.5" y2="494" stroke="#101010" stroke-width="1"/>
<text x="839.3" y="413.3" font-size="6.8" textLength="63" lengthAdjust="spacingAndGlyphs" font-family="Liberation Sans" fill="#202020" stroke="#202020" stroke-width="0.12">2007-07-20 09:18:01,047</text>
<text x="841.4" y="435.9" font-size="6.8" textLength="16.2" lengthAdjust="spacingAndGlyphs" font-family="Liberation Sans" fill="#2a8a2a" stroke="#2a8a2a" stroke-width="0.12">Burner</text>
<text x="841.4" y="458.9" font-size="6.8" textLength="19.6" lengthAdjust="spacingAndGlyphs" font-family="Liberation Sans" fill="#d03030" stroke="#d03030" stroke-width="0.12">Material</text>
<text x="841.4" y="481.6" font-size="6.8" textLength="31.6" lengthAdjust="spacingAndGlyphs" font-family="Liberation Sans" fill="#3030b8" stroke="#3030b8" stroke-width="0.12">Material_Out</text>
<polyline points="147.0,470.9 148.5,471.8 150.0,471.9 151.5,470.3 153.0,468.7 154.5,470.3 156.0,469.9 157.5,465.3 159.0,466.9 160.5,468.6 162.0,467.1 163.5,466.1 165.0,462.3 166.5,467.4 168.0,467.4 169.5,467.9 171.0,466.5 172.5,463.8 174.0,469.0 175.5,464.2 177.0,468.3 178.5,468.6 180.0,467.5 181.5,464.6 183.0,466.0 184.5,468.4 186.0,463.2 187.5,467.0 189.0,464.2 190.5,463.9 192.0,467.5 193.5,464.7 195.0,467.4 196.5,469.3 198.0,468.5 199.5,470.1 201.0,472.5 202.5,471.9 204.0,472.0 205.5,467.8 207.0,471.7 208.5,471.0 210.0,473.9 211.5,471.7 213.0,473.6 214.5,468.8 216.0,467.6 217.5,470.2 219.0,465.2 220.5,468.4 222.0,466.1 223.5,468.6 225.0,465.5 226.5,466.5 228.0,463.9 229.5,465.9 231.0,463.8 232.5,467.8 234.0,466.0 235.5,465.6 237.0,467.4 238.5,468.7 240.0,471.4 241.5,467.3 243.0,470.7 244.5,468.4 246.0,465.4 247.5,468.6 249.0,463.7 250.5,465.8 252.0,470.0 253.5,469.9 255.0,476.5 256.5,472.7 258.0,472.8 259.5,474.8 261.0,470.5 262.5,476.7 264.0,472.3 265.5,475.5 267.0,479.4 268.5,477.4 270.0,476.5 271.5,475.6 273.0,479.2 274.5,475.1 276.0,475.5 277.5,469.5 279.0,471.7 280.5,467.7 282.0,467.9 283.5,468.1 285.0,469.3 286.5,467.3 288.0,468.0 289.5,466.2 291.0,470.1 292.5,467.2 294.0,468.4 295.5,465.4 297.0,468.0 298.5,464.8 300.0,465.7 301.5,466.6 303.0,469.2 304.5,468.5 306.0,468.6 307.5,469.2 309.0,470.7 310.5,470.2 312.0,476.0 313.5,473.0 315.0,476.7 316.5,472.1 318.0,476.6 319.5,477.6 321.0,474.2 322.5,471.1 324.0,468.8 325.5,464.9 327.0,465.9 328.5,465.6 330.0,466.8 331.5,467.4 333.0,471.0 334.5,467.1 336.0,470.0 337.5,470.0 339.0,470.2 340.5,471.3 342.0,470.3 343.5,471.4 345.0,468.2 346.5,473.5 348.0,468.2 349.5,473.8 351.0,471.8 352.5,473.7 354.0,473.3 355.5,477.2 357.0,472.4 358.5,477.5 360.0,474.3 361.5,477.9 363.0,477.4 364.5,474.9 366.0,475.6 367.5,474.0 369.0,475.1 370.5,473.4 372.0,475.2 373.5,476.3 375.0,471.2 376.5,471.2 378.0,470.5 379.5,468.3 381.0,470.1 382.5,468.3 384.0,465.0 385.5,465.6 387.0,467.6 388.5,469.1 390.0,468.1 391.5,468.4 393.0,471.9 394.5,466.1 396.0,468.9 397.5,472.2 399.0,469.6 400.5,469.0 402.0,471.9 403.5,473.2 405.0,470.3 406.5,470.5 408.0,469.1 409.5,469.8 411.0,474.4 412.5,471.2 414.0,475.1 415.5,469.6 417.0,473.0 418.5,471.4 420.0,474.3 421.5,472.0 423.0,474.3 424.5,474.4 426.0,472.9 427.5,470.9 429.0,470.3 430.5,474.1 432.0,467.5 433.5,470.3 435.0,467.9 436.5,469.0 438.0,465.9 439.5,467.7 441.0,465.6 442.5,468.2 444.0,468.9 445.5,466.5 447.0,468.2 448.5,463.7 450.0,463.7 451.5,465.9 453.0,464.6 454.5,465.5 456.0,464.2 457.5,465.9 459.0,465.8 460.5,467.1 462.0,464.4 463.5,467.1 465.0,469.1 466.5,466.3 468.0,467.7 469.5,470.7 471.0,471.5 472.5,477.9 474.0,478.9 475.5,479.0 477.0,478.3 478.5,476.2 480.0,475.3 481.5,472.2 483.0,472.5 484.5,471.6 486.0,470.9 487.5,471.6 489.0,476.0 490.5,472.3 492.0,475.3 493.5,475.5 495.0,476.7 496.5,475.6 498.0,478.5 499.5,477.7 501.0,480.9 502.5,479.3 504.0,482.2 505.5,480.4 507.0,482.1 508.5,480.9 510.0,480.7 511.5,482.7 513.0,481.2 514.5,483.3 516.0,481.4 517.5,482.7 519.0,481.0 520.5,485.4 522.0,482.6 523.5,483.3 525.0,482.6 526.5,482.2 528.0,481.5 529.5,482.5 531.0,479.5 532.5,479.3 534.0,483.0 535.5,480.6 537.0,478.7 538.5,479.5 540.0,479.6 541.5,481.5 543.0,484.5 544.5,484.9 546.0,484.0 547.5,483.3 549.0,485.1 550.5,484.2 552.0,484.4 553.5,482.7 555.0,483.9 556.5,480.4 558.0,476.4 559.5,469.8 561.0,472.0 562.5,468.9 564.0,472.8 565.5,470.1 567.0,473.6 568.5,471.6 570.0,468.8 571.5,471.8 573.0,475.2 574.5,473.0 576.0,475.0 577.5,475.1 579.0,477.2 580.5,477.9 582.0,476.1 583.5,479.5 585.0,476.3 586.5,474.5 588.0,478.3 589.5,474.4 591.0,473.4 592.5,478.3 594.0,472.0 595.5,477.5 597.0,475.6 598.5,478.8 600.0,475.7 601.5,476.6 603.0,477.4 604.5,477.5 606.0,480.2 607.5,479.0 609.0,482.3 610.5,478.8 612.0,479.7 613.5,477.6 615.0,481.0 616.5,477.8 618.0,477.8 619.5,475.4 621.0,474.7 622.5,473.8 624.0,478.1 625.5,475.2 627.0,474.3 628.5,475.7 630.0,475.3 631.5,479.0 633.0,479.1 634.5,475.8 636.0,480.5 637.5,476.8 639.0,480.3 640.5,480.3 642.0,479.2 643.5,480.5 645.0,477.8 646.5,476.9 648.0,479.8 649.5,479.2 651.0,476.9 652.5,478.0 654.0,476.4 655.5,474.7 657.0,476.0 658.5,475.1 660.0,475.1 661.5,476.0 663.0,474.1 664.5,477.8 666.0,475.7 667.5,477.0 669.0,475.3 670.5,475.6 672.0,474.1 673.5,475.2 675.0,471.7 676.5,473.3 678.0,472.4 679.5,471.1 681.0,470.3 682.5,470.2 684.0,471.1 685.5,473.0 687.0,474.3 688.5,475.6 690.0,475.7 691.5,474.0 693.0,478.3 694.5,473.8 696.0,478.1 697.5,473.6 699.0,479.1 700.5,476.9 702.0,478.6 703.5,476.8 705.0,475.5 706.5,476.0 708.0,474.5 709.5,473.5 711.0,471.2 712.5,473.2 714.0,474.0 715.5,469.9 717.0,474.8 718.5,470.4 720.0,470.8 721.5,469.1 723.0,472.5 724.5,471.0 726.0,474.8 727.5,475.6 729.0,476.2 730.5,476.2 732.0,476.1 733.5,475.3 735.0,479.3 736.5,477.9 738.0,479.9 739.5,478.1 741.0,482.1 742.5,477.5 744.0,479.1 745.5,477.7 747.0,479.4 748.5,479.5 750.0,475.0 751.5,478.3 753.0,477.2 754.5,474.0 756.0,473.4 757.5,475.4 759.0,475.1 760.5,474.6 762.0,473.1 763.5,471.1 765.0,470.9 766.5,471.0 768.0,473.3 769.5,470.1 771.0,471.8 772.5,473.5 774.0,475.5 775.5,471.4 777.0,471.9 778.5,471.3 780.0,472.8 781.5,471.5 783.0,468.8 784.5,468.7 786.0,469.8 787.5,470.0 789.0,470.9 790.5,471.5 792.0,468.5 793.5,472.5 795.0,473.6 796.5,474.2 798.0,470.2 799.5,473.7 801.0,470.7 802.5,472.5 804.0,467.5 805.5,471.0 807.0,471.0 808.5,470.7 810.0,470.6 811.5,472.9 813.0,473.7 814.5,473.8 816.0,472.5 817.5,473.1 819.0,468.0 820.5,470.9 822.0,467.5 823.5,472.0 825.0,475.1 826.5,477.7" fill="none" stroke="#3c3cc0" stroke-width="1.1"/>
<polyline points="147.0,466.2 148.5,466.6 150.0,466.1 151.5,475.1 153.0,470.4 154.5,469.6 156.0,466.1 157.5,466.0 159.0,465.4 160.5,464.2 162.0,463.2 163.5,461.0 165.0,455.5 166.5,457.5 168.0,456.3 169.5,454.6 171.0,452.7 172.5,454.6 174.0,451.6 175.5,453.8 177.0,453.5 178.5,458.1 180.0,458.4 181.5,453.4 183.0,457.5 184.5,454.6 186.0,453.0 187.5,452.9 189.0,455.2 190.5,453.9 192.0,455.8 193.5,455.2 195.0,451.8 196.5,455.6 198.0,459.8 199.5,463.8 201.0,464.6 202.5,462.5 204.0,460.5 205.5,461.0 207.0,465.0 208.5,463.9 210.0,463.9 211.5,464.5 213.0,460.9 214.5,462.0 216.0,458.7 217.5,463.3 219.0,463.6 220.5,466.7 222.0,465.7 223.5,460.1 225.0,457.6 226.5,459.5 228.0,453.2 229.5,455.6 231.0,456.7 232.5,452.4 234.0,458.3 235.5,455.1 237.0,456.8 238.5,460.3 240.0,463.0 241.5,460.3 243.0,459.1 244.5,454.3 246.0,455.2 247.5,458.2 249.0,454.0 250.5,456.6 252.0,457.9 253.5,463.7 255.0,470.5 256.5,469.1 258.0,470.0 259.5,466.2 261.0,467.3 262.5,467.2 264.0,464.5 265.5,465.3 267.0,464.8 268.5,461.6 270.0,460.7 271.5,458.0 273.0,459.6 274.5,463.7 276.0,460.5 277.5,463.3 279.0,461.3 280.5,461.8 282.0,458.3 283.5,462.3 285.0,459.3 286.5,462.1 288.0,458.9 289.5,464.9 291.0,460.8 292.5,463.4 294.0,460.6 295.5,457.0 297.0,462.3 298.5,463.7 300.0,468.3 301.5,466.2 303.0,468.1 304.5,463.8 306.0,462.5 307.5,459.6 309.0,453.4 310.5,453.9 312.0,457.8 313.5,459.2 315.0,458.0 316.5,460.0 318.0,465.9 319.5,467.0 321.0,465.8 322.5,463.6 324.0,464.5 325.5,466.4 327.0,462.4 328.5,455.1 330.0,454.4 331.5,456.3 333.0,456.8 334.5,461.2 336.0,458.5 337.5,461.4 339.0,456.7 340.5,460.1 342.0,461.8 343.5,460.5 345.0,458.4 346.5,460.8 348.0,466.2 349.5,466.9 351.0,468.0 352.5,467.3 354.0,466.8 355.5,467.6 357.0,464.2 358.5,469.4 360.0,468.7 361.5,473.1 363.0,472.3 364.5,466.6 366.0,467.0 367.5,464.7 369.0,460.7 370.5,466.7 372.0,463.7 373.5,464.0 375.0,462.4 376.5,461.9 378.0,456.2 379.5,458.5 381.0,453.9 382.5,456.5 384.0,454.7 385.5,453.0 387.0,454.7 388.5,454.8 390.0,455.9 391.5,456.9 393.0,454.2 394.5,456.9 396.0,457.9 397.5,459.7 399.0,460.2 400.5,463.1 402.0,465.9 403.5,469.5 405.0,469.1 406.5,459.3 408.0,461.5 409.5,461.1 411.0,459.5 412.5,458.7 414.0,463.1 415.5,461.4 417.0,466.8 418.5,469.8 420.0,468.6 421.5,470.1 423.0,469.0 424.5,468.4 426.0,465.4 427.5,467.0 429.0,463.8 430.5,464.6 432.0,465.1 433.5,463.4 435.0,466.4 436.5,458.7 438.0,458.2 439.5,459.0 441.0,459.4 442.5,458.5 444.0,463.5 445.5,462.4 447.0,462.5 448.5,463.9 450.0,461.4 451.5,462.3 453.0,465.0 454.5,461.4 456.0,464.6 457.5,459.4 459.0,460.6 460.5,459.3 462.0,462.9 463.5,462.5 465.0,462.3 466.5,465.1 468.0,470.7 469.5,469.6 471.0,475.2 472.5,472.8 474.0,480.6 475.5,473.0 477.0,474.0 478.5,468.4 480.0,465.6 481.5,462.3 483.0,465.9 484.5,459.0 486.0,459.8 487.5,461.5 489.0,456.7 490.5,457.1 492.0,457.8 493.5,458.7 495.0,462.8 496.5,464.5 498.0,464.6 499.5,471.6 501.0,473.7 502.5,472.3 504.0,479.2 505.5,476.0 507.0,478.7 508.5,477.5 510.0,483.2 511.5,480.8 513.0,484.3 514.5,481.5 516.0,481.6 517.5,483.0 519.0,484.0 520.5,488.4 522.0,484.3 523.5,486.4 525.0,486.5 526.5,483.0 528.0,483.7 529.5,482.1 531.0,481.2 532.5,478.1 534.0,478.2 535.5,479.2 537.0,479.0 538.5,477.0 540.0,477.6 541.5,480.4 543.0,477.5 544.5,481.2 546.0,483.1 547.5,484.7 549.0,488.0 550.5,484.8 552.0,481.0 553.5,474.0 555.0,474.2 556.5,472.9 558.0,469.5 559.5,468.7 561.0,468.8 562.5,468.6 564.0,471.7 565.5,467.9 567.0,471.6 568.5,470.9 570.0,473.3 571.5,467.7 573.0,472.4 574.5,467.8 576.0,467.5 577.5,471.3 579.0,472.6 580.5,472.3 582.0,471.2 583.5,477.9 585.0,473.5 586.5,476.9 588.0,476.7 589.5,474.9 591.0,476.8 592.5,476.1 594.0,475.2 595.5,475.4 597.0,478.7 598.5,475.9 600.0,479.3 601.5,474.2 603.0,477.6 604.5,476.2 606.0,481.1 607.5,479.0 609.0,480.7 610.5,478.2 612.0,476.4 613.5,477.8 615.0,475.5 616.5,474.5 618.0,476.8 619.5,473.8 621.0,473.5 622.5,475.6 624.0,477.0 625.5,476.6 627.0,474.3 628.5,473.2 630.0,477.0 631.5,472.6 633.0,476.7 634.5,473.3 636.0,479.6 637.5,475.5 639.0,476.8 640.5,475.7 642.0,477.3 643.5,478.5 645.0,474.8 646.5,474.6 648.0,475.9 649.5,477.1 651.0,473.5 652.5,475.7 654.0,476.0 655.5,472.4 657.0,475.8 658.5,472.7 660.0,471.3 661.5,471.6 663.0,476.5 664.5,472.7 666.0,474.3 667.5,476.6 669.0,474.4 670.5,474.9 672.0,473.0 673.5,475.3 675.0,471.1 676.5,472.9 678.0,473.0 679.5,471.3 681.0,469.3 682.5,470.6 684.0,473.1 685.5,472.8 687.0,470.1 688.5,476.1 690.0,469.9 691.5,473.0 693.0,472.3 694.5,475.2 696.0,475.9 697.5,477.7 699.0,474.3 700.5,478.4 702.0,472.3 703.5,474.9 705.0,470.2 706.5,470.4 708.0,466.7 709.5,469.4 711.0,463.6 712.5,467.4 714.0,462.3 715.5,463.9 717.0,462.1 718.5,461.7 720.0,466.3 721.5,468.3 723.0,467.7 724.5,470.2 726.0,471.1 727.5,464.9 729.0,466.5 730.5,466.6 732.0,470.7 733.5,465.9 735.0,471.3 736.5,471.0 738.0,471.9 739.5,468.8 741.0,475.6 742.5,470.4 744.0,475.5 745.5,473.2 747.0,473.2 748.5,475.8 750.0,473.7 751.5,471.7 753.0,473.3 754.5,470.4 756.0,471.4 757.5,469.4 759.0,470.3 760.5,466.2 762.0,469.0 763.5,465.0 765.0,470.1 766.5,467.8 768.0,468.6 769.5,464.4 771.0,468.9 772.5,467.5 774.0,466.5 775.5,467.7 777.0,471.8 778.5,469.6 780.0,466.7 781.5,470.4 783.0,467.8 784.5,466.9 786.0,468.2 787.5,465.5 789.0,467.2 790.5,466.1 792.0,470.6 793.5,469.5 795.0,471.5 796.5,470.0 798.0,469.6 799.5,468.3 801.0,470.2 802.5,466.8 804.0,468.3 805.5,467.8 807.0,465.6 808.5,466.8 810.0,462.3 811.5,464.1 813.0,465.7 814.5,460.7 816.0,461.6 817.5,461.0 819.0,465.1 820.5,460.2 822.0,463.8 823.5,462.4 825.0,463.4 826.5,458.9" fill="none" stroke="#dc4444" stroke-width="1.1"/>
<polyline points="147.0,416.2 148.5,420.7 150.0,439.6 151.5,442.0 153.0,447.9 154.5,456.0 156.0,459.1 157.5,449.1 159.0,453.3 160.5,456.0 162.0,444.1 163.5,456.0 165.0,455.0 166.5,444.4 168.0,441.9 169.5,440.6 171.0,434.6 172.5,436.0 174.0,429.5 175.5,430.3 177.0,426.3 178.5,430.8 180.0,426.7 181.5,430.1 183.0,422.8 184.5,425.9 186.0,437.4 187.5,429.5 189.0,424.2 190.5,417.3 192.0,422.2 193.5,423.0 195.0,424.3 196.5,417.0 198.0,419.1 199.5,429.3 201.0,426.8 202.5,422.4 204.0,409.2 205.5,404.2 207.0,410.1 208.5,415.8 210.0,419.8 211.5,425.0 213.0,437.1 214.5,436.6 216.0,440.0 217.5,432.1 219.0,413.1 220.5,428.2 222.0,447.2 223.5,441.8 225.0,442.6 226.5,431.8 228.0,416.3 229.5,424.6 231.0,428.8 232.5,427.2 234.0,430.8 235.5,440.7 237.0,434.9 238.5,429.7 240.0,426.9 241.5,428.5 243.0,436.1 244.5,429.9 246.0,418.1 247.5,414.7 249.0,416.2 250.5,417.8 252.0,421.3 253.5,418.1 255.0,418.1 256.5,402.5 258.0,408.6 259.5,413.8 261.0,423.6 262.5,437.4 264.0,447.2 265.5,450.3 267.0,452.0 268.5,446.2 270.0,455.1 271.5,452.2 273.0,455.6 274.5,440.0 276.0,432.5 277.5,431.2 279.0,435.5 280.5,428.6 282.0,433.3 283.5,436.7 285.0,422.9 286.5,428.9 288.0,427.9 289.5,439.3 291.0,427.9 292.5,415.1 294.0,426.4 295.5,419.9 297.0,412.7 298.5,412.7 300.0,412.4 301.5,410.8 303.0,423.0 304.5,425.2 306.0,434.2 307.5,426.7 309.0,433.7 310.5,434.2 312.0,434.7 313.5,433.0 315.0,442.8 316.5,436.8 318.0,434.2 319.5,427.7 321.0,429.0 322.5,429.9 324.0,425.8 325.5,432.7 327.0,424.1 328.5,425.3 330.0,420.6 331.5,422.0 333.0,425.5 334.5,424.1 336.0,429.4 337.5,434.9 339.0,443.5 340.5,433.3 342.0,433.4 343.5,425.1 345.0,428.7 346.5,422.0 348.0,417.5 349.5,432.9 351.0,431.6 352.5,429.6 354.0,416.5 355.5,428.6 357.0,424.8 358.5,438.8 360.0,451.1 361.5,453.4 363.0,461.0 364.5,458.0 366.0,455.3 367.5,451.3 369.0,447.6 370.5,436.9 372.0,435.1 373.5,437.7 375.0,437.2 376.5,435.4 378.0,434.7 379.5,429.9 381.0,431.3 382.5,430.7 384.0,426.6 385.5,435.1 387.0,442.1 388.5,433.8 390.0,422.1 391.5,418.4 393.0,412.1 394.5,408.2 396.0,415.0 397.5,418.6 399.0,416.5 400.5,406.5 402.0,407.8 403.5,413.1 405.0,414.1 406.5,423.9 408.0,416.8 409.5,424.8 411.0,420.4 412.5,425.2 414.0,429.0 415.5,427.9 417.0,433.5 418.5,433.1 420.0,432.7 421.5,439.1 423.0,439.6 424.5,453.5 426.0,447.2 427.5,443.3 429.0,428.4 430.5,439.1 432.0,431.0 433.5,438.8 435.0,439.6 436.5,442.3 438.0,439.1 439.5,446.6 441.0,443.2 442.5,432.5 444.0,439.2 445.5,435.4 447.0,433.5 448.5,431.9 450.0,430.9 451.5,433.1 453.0,433.3 454.5,423.0 456.0,425.4 457.5,430.2 459.0,428.8 460.5,432.1 462.0,428.0 463.5,425.7 465.0,425.7 466.5,438.5 468.0,438.0 469.5,439.6 471.0,447.1 472.5,447.0 474.0,438.9 475.5,435.6 477.0,429.4 478.5,424.1 480.0,424.2 481.5,424.9 483.0,423.6 484.5,439.9 486.0,434.5 487.5,433.3 489.0,417.9 490.5,412.3 492.0,396.0 493.5,403.7 495.0,413.7 496.5,414.0 498.0,415.8 499.5,425.7 501.0,426.1 502.5,430.7 504.0,423.6 505.5,424.9 507.0,412.1 508.5,413.3 510.0,409.1 511.5,413.5 513.0,424.8 514.5,422.4 516.0,430.4 517.5,433.3 519.0,430.2 520.5,417.3 522.0,410.8 523.5,423.5 525.0,433.2 526.5,447.1 528.0,452.4 529.5,443.2 531.0,434.5 532.5,446.1 534.0,457.6 535.5,463.7 537.0,470.5 538.5,463.8 540.0,458.5 541.5,443.3 543.0,432.1 544.5,448.1 546.0,458.5 547.5,459.5 549.0,464.4 550.5,463.3 552.0,448.5 553.5,444.1 555.0,451.5 556.5,458.2 558.0,469.8 559.5,460.9 561.0,464.5 562.5,459.3 564.0,456.6 565.5,451.8 567.0,452.6 568.5,451.3 570.0,454.9 571.5,457.9 573.0,462.9 574.5,458.6 576.0,447.8 577.5,440.2 579.0,450.1 580.5,447.9 582.0,451.3 583.5,458.3 585.0,460.5 586.5,464.9 588.0,473.4 589.5,468.0 591.0,462.8 592.5,465.1 594.0,460.0 595.5,474.1 597.0,467.2 598.5,473.5 600.0,469.2 601.5,467.8 603.0,461.8 604.5,463.0 606.0,455.3 607.5,458.9 609.0,464.1 610.5,473.3 612.0,468.2 613.5,461.6 615.0,455.1 616.5,463.7 618.0,457.4 619.5,461.6 621.0,462.5 622.5,468.2 624.0,463.8 625.5,463.3 627.0,456.7 628.5,452.2 630.0,449.1 631.5,453.7 633.0,459.0 634.5,463.4 636.0,467.2 637.5,465.7 639.0,467.5 640.5,460.5 642.0,450.5 643.5,444.3 645.0,445.7 646.5,426.9 648.0,428.9 649.5,421.0 651.0,425.8 652.5,434.1 654.0,439.5 655.5,450.8 657.0,463.1 658.5,451.0 660.0,454.7 661.5,453.6 663.0,451.6 664.5,446.0 666.0,450.0 667.5,449.1 669.0,456.9 670.5,452.1 672.0,454.7 673.5,458.7 675.0,456.7 676.5,450.6 678.0,453.9 679.5,449.2 681.0,444.4 682.5,447.4 684.0,451.1 685.5,454.1 687.0,451.5 688.5,448.2 690.0,455.3 691.5,455.7 693.0,449.6 694.5,449.2 696.0,439.4 697.5,438.6 699.0,432.1 700.5,428.2 702.0,445.7 703.5,456.9 705.0,449.5 706.5,440.6 708.0,427.5 709.5,431.9 711.0,444.1 712.5,447.2 714.0,452.1 715.5,440.1 717.0,441.9 718.5,436.5 720.0,435.3 721.5,439.6 723.0,441.6 724.5,452.1 726.0,441.8 727.5,437.9 729.0,433.4 730.5,428.5 732.0,443.6 733.5,449.9 735.0,443.5 736.5,456.2 738.0,453.9 739.5,455.9 741.0,459.7 742.5,461.1 744.0,456.1 745.5,464.4 747.0,466.1 748.5,468.3 750.0,469.2 751.5,465.5 753.0,465.2 754.5,455.8 756.0,459.9 757.5,460.1 759.0,453.7 760.5,444.5 762.0,433.4 763.5,441.6 765.0,439.7 766.5,445.1 768.0,446.4 769.5,451.8 771.0,451.9 772.5,456.4 774.0,450.4 775.5,452.5 777.0,448.8 778.5,440.6 780.0,429.0 781.5,438.4 783.0,437.7 784.5,446.3 786.0,430.5 787.5,424.9 789.0,437.3 790.5,437.4 792.0,449.3 793.5,455.6 795.0,450.7 796.5,459.7 798.0,458.6 799.5,462.0 801.0,455.2 802.5,454.7 804.0,452.7 805.5,453.0 807.0,451.9 808.5,457.8 810.0,456.4 811.5,455.5 813.0,456.6 814.5,452.4 816.0,441.9 817.5,438.4 819.0,441.2 820.5,451.0 822.0,448.3 823.5,444.5 825.0,434.0 826.5,432.8" fill="none" stroke="#389038" stroke-width="1.1"/>
</svg>
<div style="position:absolute;left:976px;top:385px;width:11px;height:120px;background:#f4f4f4;border:1px solid #dcdcdc;"></div>
<div style="position:absolute;left:988px;top:385px;width:11px;height:120px;background:#f4f4f4;border:1px solid #dcdcdc;"></div>
<div style="position:absolute;left:988px;top:437px;width:11px;height:12px;background:#f0f0f0;border-top:1px solid #dcdcdc;border-bottom:1px solid #dcdcdc;"></div>
<div style="position:absolute;left:979px;top:386px;font-size:6px;line-height:8px;color:#888;font-weight:normal;white-space:nowrap;">&#710;</div>
<div style="position:absolute;left:991px;top:386px;font-size:6px;line-height:8px;color:#888;font-weight:normal;white-space:nowrap;">&#710;</div>
<div style="position:absolute;left:979px;top:494px;font-size:6px;line-height:8px;color:#888;font-weight:normal;white-space:nowrap;">&#711;</div>
<div style="position:absolute;left:991px;top:494px;font-size:6px;line-height:8px;color:#888;font-weight:normal;white-space:nowrap;">&#711;</div>
<div style="position:absolute;left:991px;top:430px;font-size:6px;line-height:8px;color:#888;font-weight:normal;white-space:nowrap;">&#711;</div>
<div style="position:absolute;left:991px;top:446px;font-size:6px;line-height:8px;color:#888;font-weight:normal;white-space:nowrap;">&#710;</div>
<div style="position:absolute;left:88px;top:505px;width:912px;height:14px;background:#f0f0f0;"></div>
<div style="position:absolute;left:89px;top:506px;width:62px;height:11px;background:#f2f2f2;border:1px solid #dcdcdc;"></div>
<div style="position:absolute;left:91px;top:508px;width:7px;height:6px;background:#fff;border:1px solid #c08080;border-top:2px solid #e07080;"></div>
<div style="position:absolute;left:100px;top:506.25px;font-size:7px;line-height:11px;color:#a0a0a0;font-weight:normal;white-space:nowrap;transform:scaleX(0.851);transform-origin:0 50%;-webkit-text-stroke:0.1px #a0a0a0;">VOI-Liste: Gesamt</div>
<div style="position:absolute;left:151px;top:506px;width:62px;height:11px;background:#fafafa;border:1px solid #d0d0d0;"></div>
<div style="position:absolute;left:153px;top:508px;width:7px;height:6px;background:#fff;border:1px solid #806060;border-top:2px solid #d06070;"></div>
<div style="position:absolute;left:164px;top:506.25px;font-size:7px;line-height:11px;color:#202020;font-weight:normal;white-space:nowrap;transform:scaleX(0.888);transform-origin:0 50%;-webkit-text-stroke:0.15px #202020;">VOI: Trendprofile</div>
<div style="position:absolute;left:0px;top:519px;width:1000px;height:10px;background:#f0f0f0;"></div>
<div style="position:absolute;left:2px;top:519.50px;font-size:7px;line-height:11px;color:#202020;font-weight:normal;white-space:nowrap;transform:scaleX(0.820);transform-origin:0 50%;-webkit-text-stroke:0.15px #202020;">Bereit</div>
<div style="position:absolute;left:930.7px;top:519.50px;font-size:7px;line-height:11px;color:#202020;font-weight:normal;white-space:nowrap;transform:scaleX(0.902);transform-origin:0 50%;-webkit-text-stroke:0.15px #202020;">HelpID</div>
<div style="position:absolute;left:960px;top:519.50px;font-size:7px;line-height:11px;color:#a8a8a8;font-weight:normal;white-space:nowrap;transform:scaleX(0.750);transform-origin:0 50%;">UF</div>
<div style="position:absolute;left:973px;top:519.50px;font-size:7px;line-height:11px;color:#202020;font-weight:normal;white-space:nowrap;transform:scaleX(0.878);transform-origin:0 50%;-webkit-text-stroke:0.15px #202020;">NUM</div>
<div style="position:absolute;left:993px;top:519.50px;font-size:7px;line-height:11px;color:#a8a8a8;font-weight:normal;white-space:nowrap;transform:scaleX(0.750);transform-origin:0 50%;">RF</div>
</body></html>
